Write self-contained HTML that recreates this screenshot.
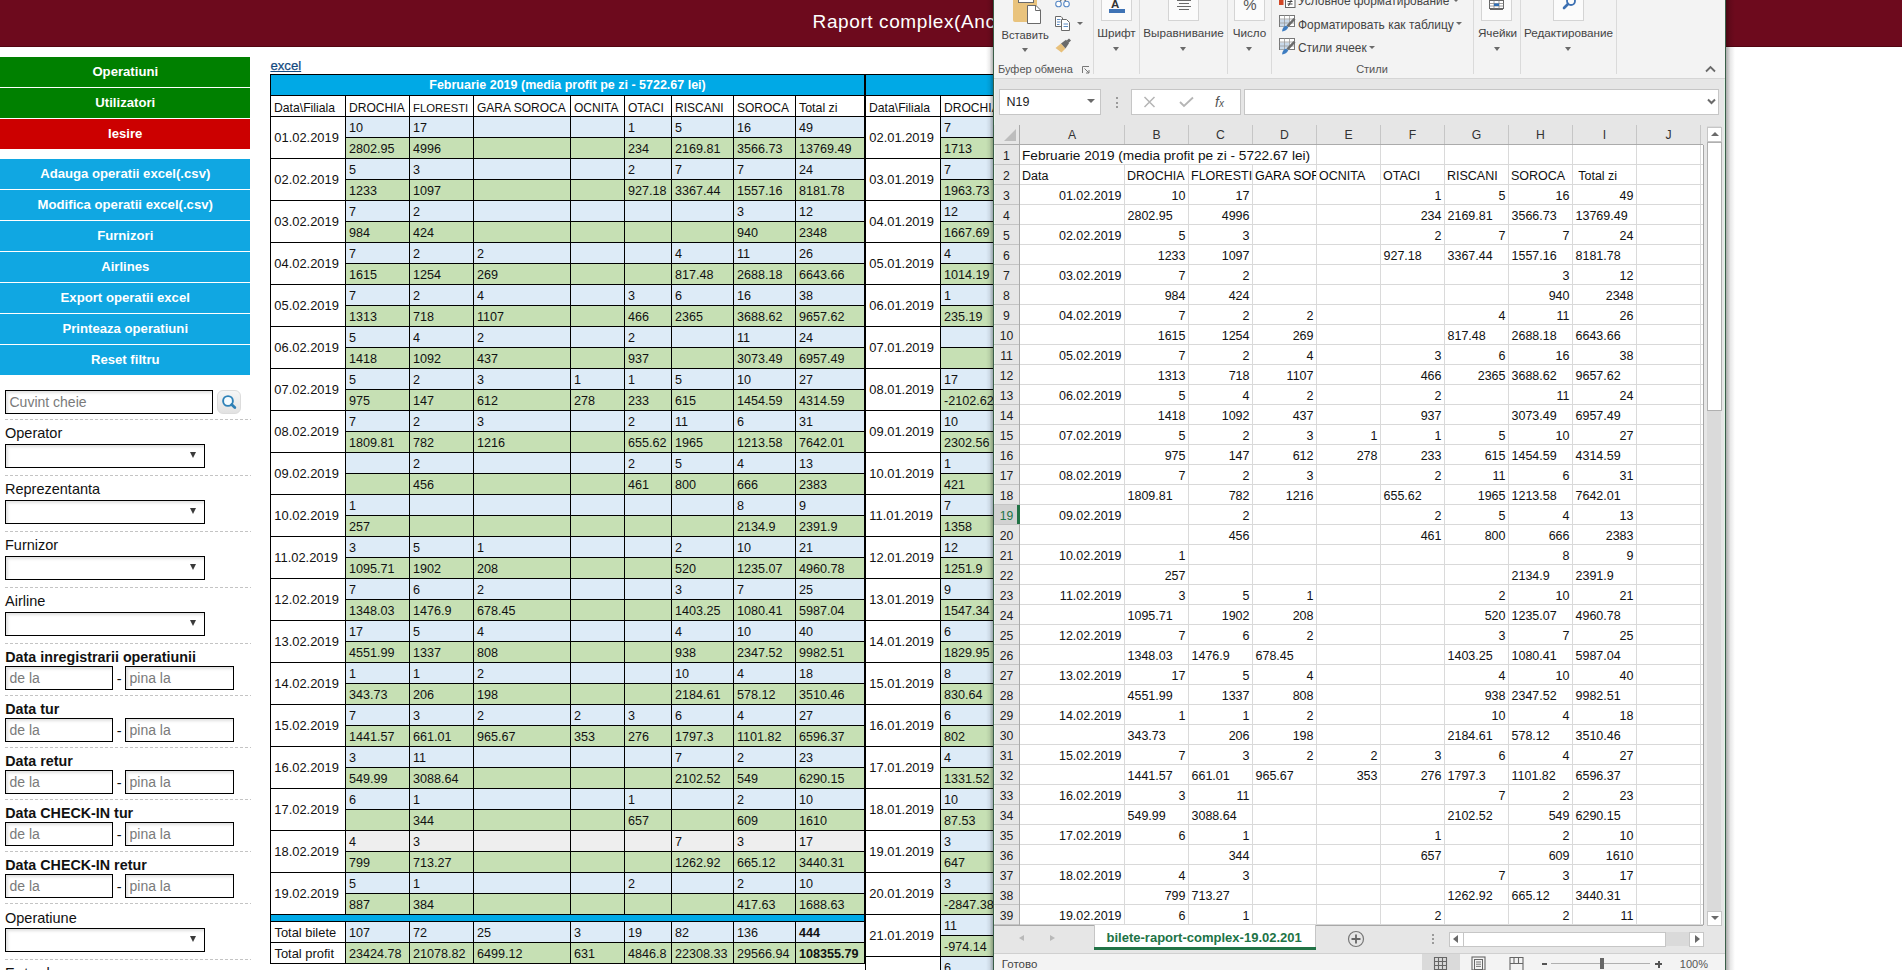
<!DOCTYPE html>
<html><head><meta charset="utf-8"><title>Raport complex</title>
<style>
html,body{margin:0;padding:0;width:1902px;height:970px;overflow:hidden;background:#fff;position:relative;font-family:"Liberation Sans",sans-serif}
div,svg{position:absolute;box-sizing:content-box}
.t{white-space:pre;line-height:0;height:0}
.inp{border:1px solid #000;background:#fff;box-shadow:inset 2px 2px 3px rgba(0,0,0,0.12)}
</style></head><body>
<div style="left:0px;top:0px;width:1902px;height:46px;background:#6d0a1d;"></div>
<div style="left:0px;top:46px;width:1902px;height:1px;background:#520512;"></div>
<div class="t" style="left:812.6px;top:21.72px;font-size:19px;color:#fff;letter-spacing:0.6px">Raport complex(Ancheta)</div>
<div style="left:0px;top:57px;width:250px;height:30px;background:#008000;"></div>
<div class="t" style="left:-374.75px;width:1000px;text-align:center;top:72.24px;font-size:13.15px;font-weight:bold;color:#fff;">Operatiuni</div>
<div style="left:0px;top:88px;width:250px;height:30px;background:#008000;"></div>
<div class="t" style="left:-374.75px;width:1000px;text-align:center;top:103.24px;font-size:13.15px;font-weight:bold;color:#fff;">Utilizatori</div>
<div style="left:0px;top:119px;width:250px;height:30px;background:#cc0000;"></div>
<div class="t" style="left:-374.75px;width:1000px;text-align:center;top:134.24px;font-size:13.15px;font-weight:bold;color:#fff;">Iesire</div>
<div style="left:0px;top:159px;width:250px;height:30px;background:#10a7e2;"></div>
<div class="t" style="left:-374.75px;width:1000px;text-align:center;top:174.24px;font-size:13.15px;font-weight:bold;color:#fff;">Adauga operatii excel(.csv)</div>
<div style="left:0px;top:190px;width:250px;height:30px;background:#10a7e2;"></div>
<div class="t" style="left:-374.75px;width:1000px;text-align:center;top:205.24px;font-size:13.15px;font-weight:bold;color:#fff;">Modifica operatii excel(.csv)</div>
<div style="left:0px;top:221px;width:250px;height:30px;background:#10a7e2;"></div>
<div class="t" style="left:-374.75px;width:1000px;text-align:center;top:236.24px;font-size:13.15px;font-weight:bold;color:#fff;">Furnizori</div>
<div style="left:0px;top:252px;width:250px;height:30px;background:#10a7e2;"></div>
<div class="t" style="left:-374.75px;width:1000px;text-align:center;top:267.24px;font-size:13.15px;font-weight:bold;color:#fff;">Airlines</div>
<div style="left:0px;top:283px;width:250px;height:30px;background:#10a7e2;"></div>
<div class="t" style="left:-374.75px;width:1000px;text-align:center;top:298.24px;font-size:13.15px;font-weight:bold;color:#fff;">Export operatii excel</div>
<div style="left:0px;top:314px;width:250px;height:30px;background:#10a7e2;"></div>
<div class="t" style="left:-374.75px;width:1000px;text-align:center;top:329.24px;font-size:13.15px;font-weight:bold;color:#fff;">Printeaza operatiuni</div>
<div style="left:0px;top:345px;width:250px;height:30px;background:#10a7e2;"></div>
<div class="t" style="left:-374.75px;width:1000px;text-align:center;top:360.24px;font-size:13.15px;font-weight:bold;color:#fff;">Reset filtru</div>
<div class="inp" style="left:5px;top:390px;width:206px;height:22px"></div>
<div class="t" style="left:9.5px;top:401.95px;font-size:14px;color:#7a7a7a;">Cuvint cheie</div>
<div style="left:217px;top:390px;width:22px;height:22px;border-radius:6px;border:1px solid #dcdcdc;background:linear-gradient(#f6f6f6,#e2e2e2)"></div>
<svg style="left:218px;top:391px" width="22" height="22" viewBox="0 0 22 22"><circle cx="10" cy="10" r="4.9" fill="#f4fbff" stroke="#2f82b8" stroke-width="1.9"/><line x1="13.6" y1="13.6" x2="16.8" y2="16.6" stroke="#2e7fb5" stroke-width="2.8" stroke-linecap="round"/></svg>
<div style="left:5px;top:419px;width:246px;height:1px;background:repeating-linear-gradient(to right,#c4c4c4 0 3px,transparent 3px 5px);"></div>
<div class="t" style="left:5px;top:433.38px;font-size:14.5px;color:#111;">Operator</div>
<div class="inp" style="left:5px;top:444px;width:198px;height:22px"></div>
<div style="left:189.5px;top:452px;width:0;height:0;border-left:3.5px solid transparent;border-right:3.5px solid transparent;border-top:6px solid #3a3a3a"></div>
<div style="left:5px;top:475px;width:246px;height:1px;background:repeating-linear-gradient(to right,#c4c4c4 0 3px,transparent 3px 5px);"></div>
<div class="t" style="left:5px;top:489.38px;font-size:14.5px;color:#111;">Reprezentanta</div>
<div class="inp" style="left:5px;top:500px;width:198px;height:22px"></div>
<div style="left:189.5px;top:508px;width:0;height:0;border-left:3.5px solid transparent;border-right:3.5px solid transparent;border-top:6px solid #3a3a3a"></div>
<div style="left:5px;top:531px;width:246px;height:1px;background:repeating-linear-gradient(to right,#c4c4c4 0 3px,transparent 3px 5px);"></div>
<div class="t" style="left:5px;top:545.38px;font-size:14.5px;color:#111;">Furnizor</div>
<div class="inp" style="left:5px;top:556px;width:198px;height:22px"></div>
<div style="left:189.5px;top:564px;width:0;height:0;border-left:3.5px solid transparent;border-right:3.5px solid transparent;border-top:6px solid #3a3a3a"></div>
<div style="left:5px;top:587px;width:246px;height:1px;background:repeating-linear-gradient(to right,#c4c4c4 0 3px,transparent 3px 5px);"></div>
<div class="t" style="left:5px;top:601.38px;font-size:14.5px;color:#111;">Airline</div>
<div class="inp" style="left:5px;top:612px;width:198px;height:22px"></div>
<div style="left:189.5px;top:620px;width:0;height:0;border-left:3.5px solid transparent;border-right:3.5px solid transparent;border-top:6px solid #3a3a3a"></div>
<div style="left:5px;top:643px;width:246px;height:1px;background:repeating-linear-gradient(to right,#c4c4c4 0 3px,transparent 3px 5px);"></div>
<div class="t" style="left:5.3px;top:657.45px;font-size:14.3px;font-weight:bold;color:#111;">Data inregistrarii operatiunii</div>
<div class="inp" style="left:5px;top:666px;width:106px;height:22px"></div>
<div class="t" style="left:9.5px;top:677.95px;font-size:14px;color:#7a7a7a;">de la</div>
<div class="t" style="left:116.8px;top:678.98px;font-size:14.5px;color:#111;">-</div>
<div class="inp" style="left:125px;top:666px;width:107px;height:22px"></div>
<div class="t" style="left:129.5px;top:677.95px;font-size:14px;color:#7a7a7a;">pina la</div>
<div style="left:5px;top:695px;width:246px;height:1px;background:repeating-linear-gradient(to right,#c4c4c4 0 3px,transparent 3px 5px);"></div>
<div class="t" style="left:5.3px;top:709.45px;font-size:14.3px;font-weight:bold;color:#111;">Data tur</div>
<div class="inp" style="left:5px;top:718px;width:106px;height:22px"></div>
<div class="t" style="left:9.5px;top:729.95px;font-size:14px;color:#7a7a7a;">de la</div>
<div class="t" style="left:116.8px;top:730.98px;font-size:14.5px;color:#111;">-</div>
<div class="inp" style="left:125px;top:718px;width:107px;height:22px"></div>
<div class="t" style="left:129.5px;top:729.95px;font-size:14px;color:#7a7a7a;">pina la</div>
<div style="left:5px;top:747px;width:246px;height:1px;background:repeating-linear-gradient(to right,#c4c4c4 0 3px,transparent 3px 5px);"></div>
<div class="t" style="left:5.3px;top:761.45px;font-size:14.3px;font-weight:bold;color:#111;">Data retur</div>
<div class="inp" style="left:5px;top:770px;width:106px;height:22px"></div>
<div class="t" style="left:9.5px;top:781.95px;font-size:14px;color:#7a7a7a;">de la</div>
<div class="t" style="left:116.8px;top:782.98px;font-size:14.5px;color:#111;">-</div>
<div class="inp" style="left:125px;top:770px;width:107px;height:22px"></div>
<div class="t" style="left:129.5px;top:781.95px;font-size:14px;color:#7a7a7a;">pina la</div>
<div style="left:5px;top:799px;width:246px;height:1px;background:repeating-linear-gradient(to right,#c4c4c4 0 3px,transparent 3px 5px);"></div>
<div class="t" style="left:5.3px;top:813.45px;font-size:14.3px;font-weight:bold;color:#111;">Data CHECK-IN tur</div>
<div class="inp" style="left:5px;top:822px;width:106px;height:22px"></div>
<div class="t" style="left:9.5px;top:833.95px;font-size:14px;color:#7a7a7a;">de la</div>
<div class="t" style="left:116.8px;top:834.98px;font-size:14.5px;color:#111;">-</div>
<div class="inp" style="left:125px;top:822px;width:107px;height:22px"></div>
<div class="t" style="left:129.5px;top:833.95px;font-size:14px;color:#7a7a7a;">pina la</div>
<div style="left:5px;top:851px;width:246px;height:1px;background:repeating-linear-gradient(to right,#c4c4c4 0 3px,transparent 3px 5px);"></div>
<div class="t" style="left:5.3px;top:865.45px;font-size:14.3px;font-weight:bold;color:#111;">Data CHECK-IN retur</div>
<div class="inp" style="left:5px;top:874px;width:106px;height:22px"></div>
<div class="t" style="left:9.5px;top:885.95px;font-size:14px;color:#7a7a7a;">de la</div>
<div class="t" style="left:116.8px;top:886.98px;font-size:14.5px;color:#111;">-</div>
<div class="inp" style="left:125px;top:874px;width:107px;height:22px"></div>
<div class="t" style="left:129.5px;top:885.95px;font-size:14px;color:#7a7a7a;">pina la</div>
<div style="left:5px;top:903px;width:246px;height:1px;background:repeating-linear-gradient(to right,#c4c4c4 0 3px,transparent 3px 5px);"></div>
<div class="t" style="left:5px;top:917.58px;font-size:14.5px;color:#111;">Operatiune</div>
<div class="inp" style="left:5px;top:928px;width:198px;height:22px"></div>
<div style="left:189.5px;top:936px;width:0;height:0;border-left:3.5px solid transparent;border-right:3.5px solid transparent;border-top:6px solid #3a3a3a"></div>
<div style="left:5px;top:959px;width:246px;height:1px;background:repeating-linear-gradient(to right,#c4c4c4 0 3px,transparent 3px 5px);"></div>
<div class="t" style="left:5px;top:972.68px;font-size:14.5px;color:#111;">E</div>
<div class="t" style="left:24.3px;top:972.68px;font-size:14.5px;color:#111;">t</div>
<div class="t" style="left:46.6px;top:972.68px;font-size:14.5px;color:#111;">l</div>
<div class="t" style="left:270.4px;top:66.03px;font-size:13.2px;color:#134a80;text-decoration-thickness:1px;-webkit-text-stroke:0.25px #134a80"><u>excel</u></div>
<div style="left:271px;top:75px;width:593px;height:20px;background:#00a9e6;"></div>
<div class="t" style="left:67.5px;width:1000px;text-align:center;top:85.37px;font-size:12.5px;font-weight:bold;color:#fff;">Februarie 2019 (media profit pe zi - 5722.67 lei)</div>
<div style="left:271px;top:96px;width:593px;height:20px;background:#fff;"></div>
<div class="t" style="left:274px;top:107.57px;font-size:12.2px;color:#111;">Data\Filiala</div>
<div class="t" style="left:349px;top:107.61px;font-size:12.1px;color:#111;">DROCHIA</div>
<div class="t" style="left:413px;top:107.88px;font-size:11.3px;color:#111;">FLORESTI</div>
<div class="t" style="left:477px;top:107.64px;font-size:12.0px;color:#111;">GARA SOROCA</div>
<div class="t" style="left:574px;top:107.64px;font-size:12.0px;color:#111;">OCNITA</div>
<div class="t" style="left:628px;top:107.64px;font-size:12.0px;color:#111;">OTACI</div>
<div class="t" style="left:675px;top:107.64px;font-size:12.0px;color:#111;">RISCANI</div>
<div class="t" style="left:737px;top:107.64px;font-size:12.0px;color:#111;">SOROCA</div>
<div class="t" style="left:799px;top:107.50px;font-size:12.4px;color:#111;">Total zi</div>
<div style="left:346px;top:117px;width:518px;height:20px;background:#ddebf7;"></div>
<div style="left:346px;top:138px;width:518px;height:20px;background:#c6e0b4;"></div>
<div class="t" style="left:274.3px;top:138.03px;font-size:12.9px;color:#111;">01.02.2019</div>
<div class="t" style="left:349px;top:128.23px;font-size:12.6px;color:#111;">10</div>
<div class="t" style="left:349px;top:149.23px;font-size:12.6px;color:#111;">2802.95</div>
<div class="t" style="left:413px;top:128.23px;font-size:12.6px;color:#111;">17</div>
<div class="t" style="left:413px;top:149.23px;font-size:12.6px;color:#111;">4996</div>
<div class="t" style="left:628px;top:128.23px;font-size:12.6px;color:#111;">1</div>
<div class="t" style="left:628px;top:149.23px;font-size:12.6px;color:#111;">234</div>
<div class="t" style="left:675px;top:128.23px;font-size:12.6px;color:#111;">5</div>
<div class="t" style="left:675px;top:149.23px;font-size:12.6px;color:#111;">2169.81</div>
<div class="t" style="left:737px;top:128.23px;font-size:12.6px;color:#111;">16</div>
<div class="t" style="left:737px;top:149.23px;font-size:12.6px;color:#111;">3566.73</div>
<div class="t" style="left:799px;top:128.23px;font-size:12.6px;color:#111;">49</div>
<div class="t" style="left:799px;top:149.23px;font-size:12.6px;color:#111;">13769.49</div>
<div style="left:346px;top:159px;width:518px;height:20px;background:#ddebf7;"></div>
<div style="left:346px;top:180px;width:518px;height:20px;background:#c6e0b4;"></div>
<div class="t" style="left:274.3px;top:180.03px;font-size:12.9px;color:#111;">02.02.2019</div>
<div class="t" style="left:349px;top:170.23px;font-size:12.6px;color:#111;">5</div>
<div class="t" style="left:349px;top:191.23px;font-size:12.6px;color:#111;">1233</div>
<div class="t" style="left:413px;top:170.23px;font-size:12.6px;color:#111;">3</div>
<div class="t" style="left:413px;top:191.23px;font-size:12.6px;color:#111;">1097</div>
<div class="t" style="left:628px;top:170.23px;font-size:12.6px;color:#111;">2</div>
<div class="t" style="left:628px;top:191.23px;font-size:12.6px;color:#111;">927.18</div>
<div class="t" style="left:675px;top:170.23px;font-size:12.6px;color:#111;">7</div>
<div class="t" style="left:675px;top:191.23px;font-size:12.6px;color:#111;">3367.44</div>
<div class="t" style="left:737px;top:170.23px;font-size:12.6px;color:#111;">7</div>
<div class="t" style="left:737px;top:191.23px;font-size:12.6px;color:#111;">1557.16</div>
<div class="t" style="left:799px;top:170.23px;font-size:12.6px;color:#111;">24</div>
<div class="t" style="left:799px;top:191.23px;font-size:12.6px;color:#111;">8181.78</div>
<div style="left:346px;top:201px;width:518px;height:20px;background:#ddebf7;"></div>
<div style="left:346px;top:222px;width:518px;height:20px;background:#c6e0b4;"></div>
<div class="t" style="left:274.3px;top:222.03px;font-size:12.9px;color:#111;">03.02.2019</div>
<div class="t" style="left:349px;top:212.23px;font-size:12.6px;color:#111;">7</div>
<div class="t" style="left:349px;top:233.23px;font-size:12.6px;color:#111;">984</div>
<div class="t" style="left:413px;top:212.23px;font-size:12.6px;color:#111;">2</div>
<div class="t" style="left:413px;top:233.23px;font-size:12.6px;color:#111;">424</div>
<div class="t" style="left:737px;top:212.23px;font-size:12.6px;color:#111;">3</div>
<div class="t" style="left:737px;top:233.23px;font-size:12.6px;color:#111;">940</div>
<div class="t" style="left:799px;top:212.23px;font-size:12.6px;color:#111;">12</div>
<div class="t" style="left:799px;top:233.23px;font-size:12.6px;color:#111;">2348</div>
<div style="left:346px;top:243px;width:518px;height:20px;background:#ddebf7;"></div>
<div style="left:346px;top:264px;width:518px;height:20px;background:#c6e0b4;"></div>
<div class="t" style="left:274.3px;top:264.03px;font-size:12.9px;color:#111;">04.02.2019</div>
<div class="t" style="left:349px;top:254.23px;font-size:12.6px;color:#111;">7</div>
<div class="t" style="left:349px;top:275.23px;font-size:12.6px;color:#111;">1615</div>
<div class="t" style="left:413px;top:254.23px;font-size:12.6px;color:#111;">2</div>
<div class="t" style="left:413px;top:275.23px;font-size:12.6px;color:#111;">1254</div>
<div class="t" style="left:477px;top:254.23px;font-size:12.6px;color:#111;">2</div>
<div class="t" style="left:477px;top:275.23px;font-size:12.6px;color:#111;">269</div>
<div class="t" style="left:675px;top:254.23px;font-size:12.6px;color:#111;">4</div>
<div class="t" style="left:675px;top:275.23px;font-size:12.6px;color:#111;">817.48</div>
<div class="t" style="left:737px;top:254.23px;font-size:12.6px;color:#111;">11</div>
<div class="t" style="left:737px;top:275.23px;font-size:12.6px;color:#111;">2688.18</div>
<div class="t" style="left:799px;top:254.23px;font-size:12.6px;color:#111;">26</div>
<div class="t" style="left:799px;top:275.23px;font-size:12.6px;color:#111;">6643.66</div>
<div style="left:346px;top:285px;width:518px;height:20px;background:#ddebf7;"></div>
<div style="left:346px;top:306px;width:518px;height:20px;background:#c6e0b4;"></div>
<div class="t" style="left:274.3px;top:306.03px;font-size:12.9px;color:#111;">05.02.2019</div>
<div class="t" style="left:349px;top:296.23px;font-size:12.6px;color:#111;">7</div>
<div class="t" style="left:349px;top:317.23px;font-size:12.6px;color:#111;">1313</div>
<div class="t" style="left:413px;top:296.23px;font-size:12.6px;color:#111;">2</div>
<div class="t" style="left:413px;top:317.23px;font-size:12.6px;color:#111;">718</div>
<div class="t" style="left:477px;top:296.23px;font-size:12.6px;color:#111;">4</div>
<div class="t" style="left:477px;top:317.23px;font-size:12.6px;color:#111;">1107</div>
<div class="t" style="left:628px;top:296.23px;font-size:12.6px;color:#111;">3</div>
<div class="t" style="left:628px;top:317.23px;font-size:12.6px;color:#111;">466</div>
<div class="t" style="left:675px;top:296.23px;font-size:12.6px;color:#111;">6</div>
<div class="t" style="left:675px;top:317.23px;font-size:12.6px;color:#111;">2365</div>
<div class="t" style="left:737px;top:296.23px;font-size:12.6px;color:#111;">16</div>
<div class="t" style="left:737px;top:317.23px;font-size:12.6px;color:#111;">3688.62</div>
<div class="t" style="left:799px;top:296.23px;font-size:12.6px;color:#111;">38</div>
<div class="t" style="left:799px;top:317.23px;font-size:12.6px;color:#111;">9657.62</div>
<div style="left:346px;top:327px;width:518px;height:20px;background:#ddebf7;"></div>
<div style="left:346px;top:348px;width:518px;height:20px;background:#c6e0b4;"></div>
<div class="t" style="left:274.3px;top:348.03px;font-size:12.9px;color:#111;">06.02.2019</div>
<div class="t" style="left:349px;top:338.23px;font-size:12.6px;color:#111;">5</div>
<div class="t" style="left:349px;top:359.23px;font-size:12.6px;color:#111;">1418</div>
<div class="t" style="left:413px;top:338.23px;font-size:12.6px;color:#111;">4</div>
<div class="t" style="left:413px;top:359.23px;font-size:12.6px;color:#111;">1092</div>
<div class="t" style="left:477px;top:338.23px;font-size:12.6px;color:#111;">2</div>
<div class="t" style="left:477px;top:359.23px;font-size:12.6px;color:#111;">437</div>
<div class="t" style="left:628px;top:338.23px;font-size:12.6px;color:#111;">2</div>
<div class="t" style="left:628px;top:359.23px;font-size:12.6px;color:#111;">937</div>
<div class="t" style="left:737px;top:338.23px;font-size:12.6px;color:#111;">11</div>
<div class="t" style="left:737px;top:359.23px;font-size:12.6px;color:#111;">3073.49</div>
<div class="t" style="left:799px;top:338.23px;font-size:12.6px;color:#111;">24</div>
<div class="t" style="left:799px;top:359.23px;font-size:12.6px;color:#111;">6957.49</div>
<div style="left:346px;top:369px;width:518px;height:20px;background:#ddebf7;"></div>
<div style="left:346px;top:390px;width:518px;height:20px;background:#c6e0b4;"></div>
<div class="t" style="left:274.3px;top:390.03px;font-size:12.9px;color:#111;">07.02.2019</div>
<div class="t" style="left:349px;top:380.23px;font-size:12.6px;color:#111;">5</div>
<div class="t" style="left:349px;top:401.23px;font-size:12.6px;color:#111;">975</div>
<div class="t" style="left:413px;top:380.23px;font-size:12.6px;color:#111;">2</div>
<div class="t" style="left:413px;top:401.23px;font-size:12.6px;color:#111;">147</div>
<div class="t" style="left:477px;top:380.23px;font-size:12.6px;color:#111;">3</div>
<div class="t" style="left:477px;top:401.23px;font-size:12.6px;color:#111;">612</div>
<div class="t" style="left:574px;top:380.23px;font-size:12.6px;color:#111;">1</div>
<div class="t" style="left:574px;top:401.23px;font-size:12.6px;color:#111;">278</div>
<div class="t" style="left:628px;top:380.23px;font-size:12.6px;color:#111;">1</div>
<div class="t" style="left:628px;top:401.23px;font-size:12.6px;color:#111;">233</div>
<div class="t" style="left:675px;top:380.23px;font-size:12.6px;color:#111;">5</div>
<div class="t" style="left:675px;top:401.23px;font-size:12.6px;color:#111;">615</div>
<div class="t" style="left:737px;top:380.23px;font-size:12.6px;color:#111;">10</div>
<div class="t" style="left:737px;top:401.23px;font-size:12.6px;color:#111;">1454.59</div>
<div class="t" style="left:799px;top:380.23px;font-size:12.6px;color:#111;">27</div>
<div class="t" style="left:799px;top:401.23px;font-size:12.6px;color:#111;">4314.59</div>
<div style="left:346px;top:411px;width:518px;height:20px;background:#ddebf7;"></div>
<div style="left:346px;top:432px;width:518px;height:20px;background:#c6e0b4;"></div>
<div class="t" style="left:274.3px;top:432.03px;font-size:12.9px;color:#111;">08.02.2019</div>
<div class="t" style="left:349px;top:422.23px;font-size:12.6px;color:#111;">7</div>
<div class="t" style="left:349px;top:443.23px;font-size:12.6px;color:#111;">1809.81</div>
<div class="t" style="left:413px;top:422.23px;font-size:12.6px;color:#111;">2</div>
<div class="t" style="left:413px;top:443.23px;font-size:12.6px;color:#111;">782</div>
<div class="t" style="left:477px;top:422.23px;font-size:12.6px;color:#111;">3</div>
<div class="t" style="left:477px;top:443.23px;font-size:12.6px;color:#111;">1216</div>
<div class="t" style="left:628px;top:422.23px;font-size:12.6px;color:#111;">2</div>
<div class="t" style="left:628px;top:443.23px;font-size:12.6px;color:#111;">655.62</div>
<div class="t" style="left:675px;top:422.23px;font-size:12.6px;color:#111;">11</div>
<div class="t" style="left:675px;top:443.23px;font-size:12.6px;color:#111;">1965</div>
<div class="t" style="left:737px;top:422.23px;font-size:12.6px;color:#111;">6</div>
<div class="t" style="left:737px;top:443.23px;font-size:12.6px;color:#111;">1213.58</div>
<div class="t" style="left:799px;top:422.23px;font-size:12.6px;color:#111;">31</div>
<div class="t" style="left:799px;top:443.23px;font-size:12.6px;color:#111;">7642.01</div>
<div style="left:346px;top:453px;width:518px;height:20px;background:#ddebf7;"></div>
<div style="left:346px;top:474px;width:518px;height:20px;background:#c6e0b4;"></div>
<div class="t" style="left:274.3px;top:474.03px;font-size:12.9px;color:#111;">09.02.2019</div>
<div class="t" style="left:413px;top:464.23px;font-size:12.6px;color:#111;">2</div>
<div class="t" style="left:413px;top:485.23px;font-size:12.6px;color:#111;">456</div>
<div class="t" style="left:628px;top:464.23px;font-size:12.6px;color:#111;">2</div>
<div class="t" style="left:628px;top:485.23px;font-size:12.6px;color:#111;">461</div>
<div class="t" style="left:675px;top:464.23px;font-size:12.6px;color:#111;">5</div>
<div class="t" style="left:675px;top:485.23px;font-size:12.6px;color:#111;">800</div>
<div class="t" style="left:737px;top:464.23px;font-size:12.6px;color:#111;">4</div>
<div class="t" style="left:737px;top:485.23px;font-size:12.6px;color:#111;">666</div>
<div class="t" style="left:799px;top:464.23px;font-size:12.6px;color:#111;">13</div>
<div class="t" style="left:799px;top:485.23px;font-size:12.6px;color:#111;">2383</div>
<div style="left:346px;top:495px;width:518px;height:20px;background:#ddebf7;"></div>
<div style="left:346px;top:516px;width:518px;height:20px;background:#c6e0b4;"></div>
<div class="t" style="left:274.3px;top:516.03px;font-size:12.9px;color:#111;">10.02.2019</div>
<div class="t" style="left:349px;top:506.23px;font-size:12.6px;color:#111;">1</div>
<div class="t" style="left:349px;top:527.23px;font-size:12.6px;color:#111;">257</div>
<div class="t" style="left:737px;top:506.23px;font-size:12.6px;color:#111;">8</div>
<div class="t" style="left:737px;top:527.23px;font-size:12.6px;color:#111;">2134.9</div>
<div class="t" style="left:799px;top:506.23px;font-size:12.6px;color:#111;">9</div>
<div class="t" style="left:799px;top:527.23px;font-size:12.6px;color:#111;">2391.9</div>
<div style="left:346px;top:537px;width:518px;height:20px;background:#ddebf7;"></div>
<div style="left:346px;top:558px;width:518px;height:20px;background:#c6e0b4;"></div>
<div class="t" style="left:274.3px;top:558.03px;font-size:12.9px;color:#111;">11.02.2019</div>
<div class="t" style="left:349px;top:548.23px;font-size:12.6px;color:#111;">3</div>
<div class="t" style="left:349px;top:569.23px;font-size:12.6px;color:#111;">1095.71</div>
<div class="t" style="left:413px;top:548.23px;font-size:12.6px;color:#111;">5</div>
<div class="t" style="left:413px;top:569.23px;font-size:12.6px;color:#111;">1902</div>
<div class="t" style="left:477px;top:548.23px;font-size:12.6px;color:#111;">1</div>
<div class="t" style="left:477px;top:569.23px;font-size:12.6px;color:#111;">208</div>
<div class="t" style="left:675px;top:548.23px;font-size:12.6px;color:#111;">2</div>
<div class="t" style="left:675px;top:569.23px;font-size:12.6px;color:#111;">520</div>
<div class="t" style="left:737px;top:548.23px;font-size:12.6px;color:#111;">10</div>
<div class="t" style="left:737px;top:569.23px;font-size:12.6px;color:#111;">1235.07</div>
<div class="t" style="left:799px;top:548.23px;font-size:12.6px;color:#111;">21</div>
<div class="t" style="left:799px;top:569.23px;font-size:12.6px;color:#111;">4960.78</div>
<div style="left:346px;top:579px;width:518px;height:20px;background:#ddebf7;"></div>
<div style="left:346px;top:600px;width:518px;height:20px;background:#c6e0b4;"></div>
<div class="t" style="left:274.3px;top:600.03px;font-size:12.9px;color:#111;">12.02.2019</div>
<div class="t" style="left:349px;top:590.23px;font-size:12.6px;color:#111;">7</div>
<div class="t" style="left:349px;top:611.23px;font-size:12.6px;color:#111;">1348.03</div>
<div class="t" style="left:413px;top:590.23px;font-size:12.6px;color:#111;">6</div>
<div class="t" style="left:413px;top:611.23px;font-size:12.6px;color:#111;">1476.9</div>
<div class="t" style="left:477px;top:590.23px;font-size:12.6px;color:#111;">2</div>
<div class="t" style="left:477px;top:611.23px;font-size:12.6px;color:#111;">678.45</div>
<div class="t" style="left:675px;top:590.23px;font-size:12.6px;color:#111;">3</div>
<div class="t" style="left:675px;top:611.23px;font-size:12.6px;color:#111;">1403.25</div>
<div class="t" style="left:737px;top:590.23px;font-size:12.6px;color:#111;">7</div>
<div class="t" style="left:737px;top:611.23px;font-size:12.6px;color:#111;">1080.41</div>
<div class="t" style="left:799px;top:590.23px;font-size:12.6px;color:#111;">25</div>
<div class="t" style="left:799px;top:611.23px;font-size:12.6px;color:#111;">5987.04</div>
<div style="left:346px;top:621px;width:518px;height:20px;background:#ddebf7;"></div>
<div style="left:346px;top:642px;width:518px;height:20px;background:#c6e0b4;"></div>
<div class="t" style="left:274.3px;top:642.03px;font-size:12.9px;color:#111;">13.02.2019</div>
<div class="t" style="left:349px;top:632.23px;font-size:12.6px;color:#111;">17</div>
<div class="t" style="left:349px;top:653.23px;font-size:12.6px;color:#111;">4551.99</div>
<div class="t" style="left:413px;top:632.23px;font-size:12.6px;color:#111;">5</div>
<div class="t" style="left:413px;top:653.23px;font-size:12.6px;color:#111;">1337</div>
<div class="t" style="left:477px;top:632.23px;font-size:12.6px;color:#111;">4</div>
<div class="t" style="left:477px;top:653.23px;font-size:12.6px;color:#111;">808</div>
<div class="t" style="left:675px;top:632.23px;font-size:12.6px;color:#111;">4</div>
<div class="t" style="left:675px;top:653.23px;font-size:12.6px;color:#111;">938</div>
<div class="t" style="left:737px;top:632.23px;font-size:12.6px;color:#111;">10</div>
<div class="t" style="left:737px;top:653.23px;font-size:12.6px;color:#111;">2347.52</div>
<div class="t" style="left:799px;top:632.23px;font-size:12.6px;color:#111;">40</div>
<div class="t" style="left:799px;top:653.23px;font-size:12.6px;color:#111;">9982.51</div>
<div style="left:346px;top:663px;width:518px;height:20px;background:#ddebf7;"></div>
<div style="left:346px;top:684px;width:518px;height:20px;background:#c6e0b4;"></div>
<div class="t" style="left:274.3px;top:684.03px;font-size:12.9px;color:#111;">14.02.2019</div>
<div class="t" style="left:349px;top:674.23px;font-size:12.6px;color:#111;">1</div>
<div class="t" style="left:349px;top:695.23px;font-size:12.6px;color:#111;">343.73</div>
<div class="t" style="left:413px;top:674.23px;font-size:12.6px;color:#111;">1</div>
<div class="t" style="left:413px;top:695.23px;font-size:12.6px;color:#111;">206</div>
<div class="t" style="left:477px;top:674.23px;font-size:12.6px;color:#111;">2</div>
<div class="t" style="left:477px;top:695.23px;font-size:12.6px;color:#111;">198</div>
<div class="t" style="left:675px;top:674.23px;font-size:12.6px;color:#111;">10</div>
<div class="t" style="left:675px;top:695.23px;font-size:12.6px;color:#111;">2184.61</div>
<div class="t" style="left:737px;top:674.23px;font-size:12.6px;color:#111;">4</div>
<div class="t" style="left:737px;top:695.23px;font-size:12.6px;color:#111;">578.12</div>
<div class="t" style="left:799px;top:674.23px;font-size:12.6px;color:#111;">18</div>
<div class="t" style="left:799px;top:695.23px;font-size:12.6px;color:#111;">3510.46</div>
<div style="left:346px;top:705px;width:518px;height:20px;background:#ddebf7;"></div>
<div style="left:346px;top:726px;width:518px;height:20px;background:#c6e0b4;"></div>
<div class="t" style="left:274.3px;top:726.03px;font-size:12.9px;color:#111;">15.02.2019</div>
<div class="t" style="left:349px;top:716.23px;font-size:12.6px;color:#111;">7</div>
<div class="t" style="left:349px;top:737.23px;font-size:12.6px;color:#111;">1441.57</div>
<div class="t" style="left:413px;top:716.23px;font-size:12.6px;color:#111;">3</div>
<div class="t" style="left:413px;top:737.23px;font-size:12.6px;color:#111;">661.01</div>
<div class="t" style="left:477px;top:716.23px;font-size:12.6px;color:#111;">2</div>
<div class="t" style="left:477px;top:737.23px;font-size:12.6px;color:#111;">965.67</div>
<div class="t" style="left:574px;top:716.23px;font-size:12.6px;color:#111;">2</div>
<div class="t" style="left:574px;top:737.23px;font-size:12.6px;color:#111;">353</div>
<div class="t" style="left:628px;top:716.23px;font-size:12.6px;color:#111;">3</div>
<div class="t" style="left:628px;top:737.23px;font-size:12.6px;color:#111;">276</div>
<div class="t" style="left:675px;top:716.23px;font-size:12.6px;color:#111;">6</div>
<div class="t" style="left:675px;top:737.23px;font-size:12.6px;color:#111;">1797.3</div>
<div class="t" style="left:737px;top:716.23px;font-size:12.6px;color:#111;">4</div>
<div class="t" style="left:737px;top:737.23px;font-size:12.6px;color:#111;">1101.82</div>
<div class="t" style="left:799px;top:716.23px;font-size:12.6px;color:#111;">27</div>
<div class="t" style="left:799px;top:737.23px;font-size:12.6px;color:#111;">6596.37</div>
<div style="left:346px;top:747px;width:518px;height:20px;background:#ddebf7;"></div>
<div style="left:346px;top:768px;width:518px;height:20px;background:#c6e0b4;"></div>
<div class="t" style="left:274.3px;top:768.03px;font-size:12.9px;color:#111;">16.02.2019</div>
<div class="t" style="left:349px;top:758.23px;font-size:12.6px;color:#111;">3</div>
<div class="t" style="left:349px;top:779.23px;font-size:12.6px;color:#111;">549.99</div>
<div class="t" style="left:413px;top:758.23px;font-size:12.6px;color:#111;">11</div>
<div class="t" style="left:413px;top:779.23px;font-size:12.6px;color:#111;">3088.64</div>
<div class="t" style="left:675px;top:758.23px;font-size:12.6px;color:#111;">7</div>
<div class="t" style="left:675px;top:779.23px;font-size:12.6px;color:#111;">2102.52</div>
<div class="t" style="left:737px;top:758.23px;font-size:12.6px;color:#111;">2</div>
<div class="t" style="left:737px;top:779.23px;font-size:12.6px;color:#111;">549</div>
<div class="t" style="left:799px;top:758.23px;font-size:12.6px;color:#111;">23</div>
<div class="t" style="left:799px;top:779.23px;font-size:12.6px;color:#111;">6290.15</div>
<div style="left:346px;top:789px;width:518px;height:20px;background:#ddebf7;"></div>
<div style="left:346px;top:810px;width:518px;height:20px;background:#c6e0b4;"></div>
<div class="t" style="left:274.3px;top:810.03px;font-size:12.9px;color:#111;">17.02.2019</div>
<div class="t" style="left:349px;top:800.23px;font-size:12.6px;color:#111;">6</div>
<div class="t" style="left:413px;top:800.23px;font-size:12.6px;color:#111;">1</div>
<div class="t" style="left:413px;top:821.23px;font-size:12.6px;color:#111;">344</div>
<div class="t" style="left:628px;top:800.23px;font-size:12.6px;color:#111;">1</div>
<div class="t" style="left:628px;top:821.23px;font-size:12.6px;color:#111;">657</div>
<div class="t" style="left:737px;top:800.23px;font-size:12.6px;color:#111;">2</div>
<div class="t" style="left:737px;top:821.23px;font-size:12.6px;color:#111;">609</div>
<div class="t" style="left:799px;top:800.23px;font-size:12.6px;color:#111;">10</div>
<div class="t" style="left:799px;top:821.23px;font-size:12.6px;color:#111;">1610</div>
<div style="left:346px;top:831px;width:518px;height:20px;background:#eeeeee;"></div>
<div style="left:346px;top:852px;width:518px;height:20px;background:#c6e0b4;"></div>
<div class="t" style="left:274.3px;top:852.03px;font-size:12.9px;color:#111;">18.02.2019</div>
<div class="t" style="left:349px;top:842.23px;font-size:12.6px;color:#111;">4</div>
<div class="t" style="left:349px;top:863.23px;font-size:12.6px;color:#111;">799</div>
<div class="t" style="left:413px;top:842.23px;font-size:12.6px;color:#111;">3</div>
<div class="t" style="left:413px;top:863.23px;font-size:12.6px;color:#111;">713.27</div>
<div class="t" style="left:675px;top:842.23px;font-size:12.6px;color:#111;">7</div>
<div class="t" style="left:675px;top:863.23px;font-size:12.6px;color:#111;">1262.92</div>
<div class="t" style="left:737px;top:842.23px;font-size:12.6px;color:#111;">3</div>
<div class="t" style="left:737px;top:863.23px;font-size:12.6px;color:#111;">665.12</div>
<div class="t" style="left:799px;top:842.23px;font-size:12.6px;color:#111;">17</div>
<div class="t" style="left:799px;top:863.23px;font-size:12.6px;color:#111;">3440.31</div>
<div style="left:346px;top:873px;width:518px;height:20px;background:#ddebf7;"></div>
<div style="left:346px;top:894px;width:518px;height:20px;background:#c6e0b4;"></div>
<div class="t" style="left:274.3px;top:894.03px;font-size:12.9px;color:#111;">19.02.2019</div>
<div class="t" style="left:349px;top:884.23px;font-size:12.6px;color:#111;">5</div>
<div class="t" style="left:349px;top:905.23px;font-size:12.6px;color:#111;">887</div>
<div class="t" style="left:413px;top:884.23px;font-size:12.6px;color:#111;">1</div>
<div class="t" style="left:413px;top:905.23px;font-size:12.6px;color:#111;">384</div>
<div class="t" style="left:628px;top:884.23px;font-size:12.6px;color:#111;">2</div>
<div class="t" style="left:737px;top:884.23px;font-size:12.6px;color:#111;">2</div>
<div class="t" style="left:737px;top:905.23px;font-size:12.6px;color:#111;">417.63</div>
<div class="t" style="left:799px;top:884.23px;font-size:12.6px;color:#111;">10</div>
<div class="t" style="left:799px;top:905.23px;font-size:12.6px;color:#111;">1688.63</div>
<div style="left:271px;top:915px;width:593px;height:6px;background:#00a9e6;"></div>
<div style="left:346px;top:922px;width:518px;height:20px;background:#ddebf7;"></div>
<div style="left:346px;top:943px;width:518px;height:20px;background:#c6e0b4;"></div>
<div class="t" style="left:274.5px;top:932.53px;font-size:12.9px;color:#111;">Total bilete</div>
<div class="t" style="left:274.5px;top:953.53px;font-size:12.9px;color:#111;">Total profit</div>
<div class="t" style="left:349px;top:932.83px;font-size:12.6px;color:#111;">107</div>
<div class="t" style="left:349px;top:953.83px;font-size:12.6px;color:#111;">23424.78</div>
<div class="t" style="left:413px;top:932.83px;font-size:12.6px;color:#111;">72</div>
<div class="t" style="left:413px;top:953.83px;font-size:12.6px;color:#111;">21078.82</div>
<div class="t" style="left:477px;top:932.83px;font-size:12.6px;color:#111;">25</div>
<div class="t" style="left:477px;top:953.83px;font-size:12.6px;color:#111;">6499.12</div>
<div class="t" style="left:574px;top:932.83px;font-size:12.6px;color:#111;">3</div>
<div class="t" style="left:574px;top:953.83px;font-size:12.6px;color:#111;">631</div>
<div class="t" style="left:628px;top:932.83px;font-size:12.6px;color:#111;">19</div>
<div class="t" style="left:628px;top:953.83px;font-size:12.6px;color:#111;">4846.8</div>
<div class="t" style="left:675px;top:932.83px;font-size:12.6px;color:#111;">82</div>
<div class="t" style="left:675px;top:953.83px;font-size:12.6px;color:#111;">22308.33</div>
<div class="t" style="left:737px;top:932.83px;font-size:12.6px;color:#111;">136</div>
<div class="t" style="left:737px;top:953.83px;font-size:12.6px;color:#111;">29566.94</div>
<div class="t" style="left:799px;top:932.83px;font-size:12.6px;font-weight:bold;color:#111;">444</div>
<div class="t" style="left:799px;top:953.83px;font-size:12.6px;font-weight:bold;color:#111;">108355.79</div>
<div style="left:270px;top:74px;width:1px;height:890px;background:#000;"></div>
<div style="left:345px;top:95px;width:1px;height:869px;background:#000;"></div>
<div style="left:409px;top:95px;width:1px;height:869px;background:#000;"></div>
<div style="left:473px;top:95px;width:1px;height:869px;background:#000;"></div>
<div style="left:570px;top:95px;width:1px;height:869px;background:#000;"></div>
<div style="left:624px;top:95px;width:1px;height:869px;background:#000;"></div>
<div style="left:671px;top:95px;width:1px;height:869px;background:#000;"></div>
<div style="left:733px;top:95px;width:1px;height:869px;background:#000;"></div>
<div style="left:795px;top:95px;width:1px;height:869px;background:#000;"></div>
<div style="left:864px;top:74px;width:1px;height:890px;background:#000;"></div>
<div style="left:270px;top:74px;width:595px;height:1px;background:#000;"></div>
<div style="left:270px;top:95px;width:595px;height:1px;background:#000;"></div>
<div style="left:270px;top:116px;width:595px;height:1px;background:#000;"></div>
<div style="left:345px;top:137px;width:520px;height:1px;background:#000;"></div>
<div style="left:270px;top:158px;width:595px;height:1px;background:#000;"></div>
<div style="left:345px;top:179px;width:520px;height:1px;background:#000;"></div>
<div style="left:270px;top:200px;width:595px;height:1px;background:#000;"></div>
<div style="left:345px;top:221px;width:520px;height:1px;background:#000;"></div>
<div style="left:270px;top:242px;width:595px;height:1px;background:#000;"></div>
<div style="left:345px;top:263px;width:520px;height:1px;background:#000;"></div>
<div style="left:270px;top:284px;width:595px;height:1px;background:#000;"></div>
<div style="left:345px;top:305px;width:520px;height:1px;background:#000;"></div>
<div style="left:270px;top:326px;width:595px;height:1px;background:#000;"></div>
<div style="left:345px;top:347px;width:520px;height:1px;background:#000;"></div>
<div style="left:270px;top:368px;width:595px;height:1px;background:#000;"></div>
<div style="left:345px;top:389px;width:520px;height:1px;background:#000;"></div>
<div style="left:270px;top:410px;width:595px;height:1px;background:#000;"></div>
<div style="left:345px;top:431px;width:520px;height:1px;background:#000;"></div>
<div style="left:270px;top:452px;width:595px;height:1px;background:#000;"></div>
<div style="left:345px;top:473px;width:520px;height:1px;background:#000;"></div>
<div style="left:270px;top:494px;width:595px;height:1px;background:#000;"></div>
<div style="left:345px;top:515px;width:520px;height:1px;background:#000;"></div>
<div style="left:270px;top:536px;width:595px;height:1px;background:#000;"></div>
<div style="left:345px;top:557px;width:520px;height:1px;background:#000;"></div>
<div style="left:270px;top:578px;width:595px;height:1px;background:#000;"></div>
<div style="left:345px;top:599px;width:520px;height:1px;background:#000;"></div>
<div style="left:270px;top:620px;width:595px;height:1px;background:#000;"></div>
<div style="left:345px;top:641px;width:520px;height:1px;background:#000;"></div>
<div style="left:270px;top:662px;width:595px;height:1px;background:#000;"></div>
<div style="left:345px;top:683px;width:520px;height:1px;background:#000;"></div>
<div style="left:270px;top:704px;width:595px;height:1px;background:#000;"></div>
<div style="left:345px;top:725px;width:520px;height:1px;background:#000;"></div>
<div style="left:270px;top:746px;width:595px;height:1px;background:#000;"></div>
<div style="left:345px;top:767px;width:520px;height:1px;background:#000;"></div>
<div style="left:270px;top:788px;width:595px;height:1px;background:#000;"></div>
<div style="left:345px;top:809px;width:520px;height:1px;background:#000;"></div>
<div style="left:270px;top:830px;width:595px;height:1px;background:#000;"></div>
<div style="left:345px;top:851px;width:520px;height:1px;background:#000;"></div>
<div style="left:270px;top:872px;width:595px;height:1px;background:#000;"></div>
<div style="left:345px;top:893px;width:520px;height:1px;background:#000;"></div>
<div style="left:270px;top:914px;width:595px;height:1px;background:#000;"></div>
<div style="left:270px;top:921px;width:595px;height:1px;background:#000;"></div>
<div style="left:270px;top:942px;width:595px;height:1px;background:#000;"></div>
<div style="left:270px;top:963px;width:595px;height:1px;background:#000;"></div>
<div style="left:271px;top:915px;width:593px;height:6px;background:#00a9e6;"></div>
<div style="left:866px;top:75px;width:130px;height:20px;background:#00a9e6;"></div>
<div class="t" style="left:869px;top:107.57px;font-size:12.2px;color:#111;">Data\Filiala</div>
<div class="t" style="left:944px;top:107.61px;font-size:12.1px;color:#111;">DROCHIA</div>
<div style="left:941px;top:117px;width:55px;height:20px;background:#ddebf7;"></div>
<div style="left:941px;top:138px;width:55px;height:20px;background:#c6e0b4;"></div>
<div class="t" style="left:869.3px;top:138.03px;font-size:12.9px;color:#111;">02.01.2019</div>
<div class="t" style="left:944px;top:128.23px;font-size:12.6px;color:#111;">7</div>
<div class="t" style="left:944px;top:149.23px;font-size:12.6px;color:#111;">1713</div>
<div style="left:941px;top:159px;width:55px;height:20px;background:#ddebf7;"></div>
<div style="left:941px;top:180px;width:55px;height:20px;background:#c6e0b4;"></div>
<div class="t" style="left:869.3px;top:180.03px;font-size:12.9px;color:#111;">03.01.2019</div>
<div class="t" style="left:944px;top:170.23px;font-size:12.6px;color:#111;">7</div>
<div class="t" style="left:944px;top:191.23px;font-size:12.6px;color:#111;">1963.73</div>
<div style="left:941px;top:201px;width:55px;height:20px;background:#ddebf7;"></div>
<div style="left:941px;top:222px;width:55px;height:20px;background:#c6e0b4;"></div>
<div class="t" style="left:869.3px;top:222.03px;font-size:12.9px;color:#111;">04.01.2019</div>
<div class="t" style="left:944px;top:212.23px;font-size:12.6px;color:#111;">12</div>
<div class="t" style="left:944px;top:233.23px;font-size:12.6px;color:#111;">1667.69</div>
<div style="left:941px;top:243px;width:55px;height:20px;background:#ddebf7;"></div>
<div style="left:941px;top:264px;width:55px;height:20px;background:#c6e0b4;"></div>
<div class="t" style="left:869.3px;top:264.03px;font-size:12.9px;color:#111;">05.01.2019</div>
<div class="t" style="left:944px;top:254.23px;font-size:12.6px;color:#111;">4</div>
<div class="t" style="left:944px;top:275.23px;font-size:12.6px;color:#111;">1014.19</div>
<div style="left:941px;top:285px;width:55px;height:20px;background:#ddebf7;"></div>
<div style="left:941px;top:306px;width:55px;height:20px;background:#c6e0b4;"></div>
<div class="t" style="left:869.3px;top:306.03px;font-size:12.9px;color:#111;">06.01.2019</div>
<div class="t" style="left:944px;top:296.23px;font-size:12.6px;color:#111;">1</div>
<div class="t" style="left:944px;top:317.23px;font-size:12.6px;color:#111;">235.19</div>
<div style="left:941px;top:327px;width:55px;height:20px;background:#ddebf7;"></div>
<div style="left:941px;top:348px;width:55px;height:20px;background:#c6e0b4;"></div>
<div class="t" style="left:869.3px;top:348.03px;font-size:12.9px;color:#111;">07.01.2019</div>
<div style="left:941px;top:369px;width:55px;height:20px;background:#ddebf7;"></div>
<div style="left:941px;top:390px;width:55px;height:20px;background:#c6e0b4;"></div>
<div class="t" style="left:869.3px;top:390.03px;font-size:12.9px;color:#111;">08.01.2019</div>
<div class="t" style="left:944px;top:380.23px;font-size:12.6px;color:#111;">17</div>
<div class="t" style="left:944px;top:401.23px;font-size:12.6px;color:#111;">-2102.62</div>
<div style="left:941px;top:411px;width:55px;height:20px;background:#ddebf7;"></div>
<div style="left:941px;top:432px;width:55px;height:20px;background:#c6e0b4;"></div>
<div class="t" style="left:869.3px;top:432.03px;font-size:12.9px;color:#111;">09.01.2019</div>
<div class="t" style="left:944px;top:422.23px;font-size:12.6px;color:#111;">10</div>
<div class="t" style="left:944px;top:443.23px;font-size:12.6px;color:#111;">2302.56</div>
<div style="left:941px;top:453px;width:55px;height:20px;background:#ddebf7;"></div>
<div style="left:941px;top:474px;width:55px;height:20px;background:#c6e0b4;"></div>
<div class="t" style="left:869.3px;top:474.03px;font-size:12.9px;color:#111;">10.01.2019</div>
<div class="t" style="left:944px;top:464.23px;font-size:12.6px;color:#111;">1</div>
<div class="t" style="left:944px;top:485.23px;font-size:12.6px;color:#111;">421</div>
<div style="left:941px;top:495px;width:55px;height:20px;background:#ddebf7;"></div>
<div style="left:941px;top:516px;width:55px;height:20px;background:#c6e0b4;"></div>
<div class="t" style="left:869.3px;top:516.03px;font-size:12.9px;color:#111;">11.01.2019</div>
<div class="t" style="left:944px;top:506.23px;font-size:12.6px;color:#111;">7</div>
<div class="t" style="left:944px;top:527.23px;font-size:12.6px;color:#111;">1358</div>
<div style="left:941px;top:537px;width:55px;height:20px;background:#ddebf7;"></div>
<div style="left:941px;top:558px;width:55px;height:20px;background:#c6e0b4;"></div>
<div class="t" style="left:869.3px;top:558.03px;font-size:12.9px;color:#111;">12.01.2019</div>
<div class="t" style="left:944px;top:548.23px;font-size:12.6px;color:#111;">12</div>
<div class="t" style="left:944px;top:569.23px;font-size:12.6px;color:#111;">1251.9</div>
<div style="left:941px;top:579px;width:55px;height:20px;background:#ddebf7;"></div>
<div style="left:941px;top:600px;width:55px;height:20px;background:#c6e0b4;"></div>
<div class="t" style="left:869.3px;top:600.03px;font-size:12.9px;color:#111;">13.01.2019</div>
<div class="t" style="left:944px;top:590.23px;font-size:12.6px;color:#111;">9</div>
<div class="t" style="left:944px;top:611.23px;font-size:12.6px;color:#111;">1547.34</div>
<div style="left:941px;top:621px;width:55px;height:20px;background:#ddebf7;"></div>
<div style="left:941px;top:642px;width:55px;height:20px;background:#c6e0b4;"></div>
<div class="t" style="left:869.3px;top:642.03px;font-size:12.9px;color:#111;">14.01.2019</div>
<div class="t" style="left:944px;top:632.23px;font-size:12.6px;color:#111;">6</div>
<div class="t" style="left:944px;top:653.23px;font-size:12.6px;color:#111;">1829.95</div>
<div style="left:941px;top:663px;width:55px;height:20px;background:#ddebf7;"></div>
<div style="left:941px;top:684px;width:55px;height:20px;background:#c6e0b4;"></div>
<div class="t" style="left:869.3px;top:684.03px;font-size:12.9px;color:#111;">15.01.2019</div>
<div class="t" style="left:944px;top:674.23px;font-size:12.6px;color:#111;">8</div>
<div class="t" style="left:944px;top:695.23px;font-size:12.6px;color:#111;">830.64</div>
<div style="left:941px;top:705px;width:55px;height:20px;background:#ddebf7;"></div>
<div style="left:941px;top:726px;width:55px;height:20px;background:#c6e0b4;"></div>
<div class="t" style="left:869.3px;top:726.03px;font-size:12.9px;color:#111;">16.01.2019</div>
<div class="t" style="left:944px;top:716.23px;font-size:12.6px;color:#111;">6</div>
<div class="t" style="left:944px;top:737.23px;font-size:12.6px;color:#111;">802</div>
<div style="left:941px;top:747px;width:55px;height:20px;background:#ddebf7;"></div>
<div style="left:941px;top:768px;width:55px;height:20px;background:#c6e0b4;"></div>
<div class="t" style="left:869.3px;top:768.03px;font-size:12.9px;color:#111;">17.01.2019</div>
<div class="t" style="left:944px;top:758.23px;font-size:12.6px;color:#111;">4</div>
<div class="t" style="left:944px;top:779.23px;font-size:12.6px;color:#111;">1331.52</div>
<div style="left:941px;top:789px;width:55px;height:20px;background:#ddebf7;"></div>
<div style="left:941px;top:810px;width:55px;height:20px;background:#c6e0b4;"></div>
<div class="t" style="left:869.3px;top:810.03px;font-size:12.9px;color:#111;">18.01.2019</div>
<div class="t" style="left:944px;top:800.23px;font-size:12.6px;color:#111;">10</div>
<div class="t" style="left:944px;top:821.23px;font-size:12.6px;color:#111;">87.53</div>
<div style="left:941px;top:831px;width:55px;height:20px;background:#ddebf7;"></div>
<div style="left:941px;top:852px;width:55px;height:20px;background:#c6e0b4;"></div>
<div class="t" style="left:869.3px;top:852.03px;font-size:12.9px;color:#111;">19.01.2019</div>
<div class="t" style="left:944px;top:842.23px;font-size:12.6px;color:#111;">3</div>
<div class="t" style="left:944px;top:863.23px;font-size:12.6px;color:#111;">647</div>
<div style="left:941px;top:873px;width:55px;height:20px;background:#ddebf7;"></div>
<div style="left:941px;top:894px;width:55px;height:20px;background:#c6e0b4;"></div>
<div class="t" style="left:869.3px;top:894.03px;font-size:12.9px;color:#111;">20.01.2019</div>
<div class="t" style="left:944px;top:884.23px;font-size:12.6px;color:#111;">3</div>
<div class="t" style="left:944px;top:905.23px;font-size:12.6px;color:#111;">-2847.38</div>
<div style="left:941px;top:915px;width:55px;height:20px;background:#ddebf7;"></div>
<div style="left:941px;top:936px;width:55px;height:20px;background:#c6e0b4;"></div>
<div class="t" style="left:869.3px;top:936.03px;font-size:12.9px;color:#111;">21.01.2019</div>
<div class="t" style="left:944px;top:926.23px;font-size:12.6px;color:#111;">11</div>
<div class="t" style="left:944px;top:947.23px;font-size:12.6px;color:#111;">-974.14</div>
<div style="left:941px;top:957px;width:55px;height:20px;background:#ddebf7;"></div>
<div style="left:941px;top:978px;width:55px;height:20px;background:#c6e0b4;"></div>
<div class="t" style="left:869.3px;top:978.03px;font-size:12.9px;color:#111;">22.01.2019</div>
<div class="t" style="left:944px;top:968.23px;font-size:12.6px;color:#111;">6</div>
<div style="left:865px;top:74px;width:1px;height:900px;background:#000;"></div>
<div style="left:940px;top:95px;width:1px;height:880px;background:#000;"></div>
<div style="left:865px;top:74px;width:130px;height:1px;background:#000;"></div>
<div style="left:865px;top:95px;width:130px;height:1px;background:#000;"></div>
<div style="left:865px;top:116px;width:130px;height:1px;background:#000;"></div>
<div style="left:940px;top:137px;width:60px;height:1px;background:#000;"></div>
<div style="left:865px;top:158px;width:130px;height:1px;background:#000;"></div>
<div style="left:940px;top:179px;width:60px;height:1px;background:#000;"></div>
<div style="left:865px;top:200px;width:130px;height:1px;background:#000;"></div>
<div style="left:940px;top:221px;width:60px;height:1px;background:#000;"></div>
<div style="left:865px;top:242px;width:130px;height:1px;background:#000;"></div>
<div style="left:940px;top:263px;width:60px;height:1px;background:#000;"></div>
<div style="left:865px;top:284px;width:130px;height:1px;background:#000;"></div>
<div style="left:940px;top:305px;width:60px;height:1px;background:#000;"></div>
<div style="left:865px;top:326px;width:130px;height:1px;background:#000;"></div>
<div style="left:940px;top:347px;width:60px;height:1px;background:#000;"></div>
<div style="left:865px;top:368px;width:130px;height:1px;background:#000;"></div>
<div style="left:940px;top:389px;width:60px;height:1px;background:#000;"></div>
<div style="left:865px;top:410px;width:130px;height:1px;background:#000;"></div>
<div style="left:940px;top:431px;width:60px;height:1px;background:#000;"></div>
<div style="left:865px;top:452px;width:130px;height:1px;background:#000;"></div>
<div style="left:940px;top:473px;width:60px;height:1px;background:#000;"></div>
<div style="left:865px;top:494px;width:130px;height:1px;background:#000;"></div>
<div style="left:940px;top:515px;width:60px;height:1px;background:#000;"></div>
<div style="left:865px;top:536px;width:130px;height:1px;background:#000;"></div>
<div style="left:940px;top:557px;width:60px;height:1px;background:#000;"></div>
<div style="left:865px;top:578px;width:130px;height:1px;background:#000;"></div>
<div style="left:940px;top:599px;width:60px;height:1px;background:#000;"></div>
<div style="left:865px;top:620px;width:130px;height:1px;background:#000;"></div>
<div style="left:940px;top:641px;width:60px;height:1px;background:#000;"></div>
<div style="left:865px;top:662px;width:130px;height:1px;background:#000;"></div>
<div style="left:940px;top:683px;width:60px;height:1px;background:#000;"></div>
<div style="left:865px;top:704px;width:130px;height:1px;background:#000;"></div>
<div style="left:940px;top:725px;width:60px;height:1px;background:#000;"></div>
<div style="left:865px;top:746px;width:130px;height:1px;background:#000;"></div>
<div style="left:940px;top:767px;width:60px;height:1px;background:#000;"></div>
<div style="left:865px;top:788px;width:130px;height:1px;background:#000;"></div>
<div style="left:940px;top:809px;width:60px;height:1px;background:#000;"></div>
<div style="left:865px;top:830px;width:130px;height:1px;background:#000;"></div>
<div style="left:940px;top:851px;width:60px;height:1px;background:#000;"></div>
<div style="left:865px;top:872px;width:130px;height:1px;background:#000;"></div>
<div style="left:940px;top:893px;width:60px;height:1px;background:#000;"></div>
<div style="left:865px;top:914px;width:130px;height:1px;background:#000;"></div>
<div style="left:940px;top:935px;width:60px;height:1px;background:#000;"></div>
<div style="left:865px;top:956px;width:130px;height:1px;background:#000;"></div>
<div style="left:940px;top:977px;width:60px;height:1px;background:#000;"></div>
<div style="left:865px;top:998px;width:130px;height:1px;background:#000;"></div>
<div id="xl">
<div style="left:1726px;top:0px;width:9px;height:970px;background:linear-gradient(to right,rgba(0,0,0,0.33),rgba(0,0,0,0.09) 50%,rgba(0,0,0,0));"></div>
<div style="left:986px;top:0px;width:7px;height:970px;background:linear-gradient(to left,rgba(0,0,0,0.30),rgba(0,0,0,0.07) 50%,rgba(0,0,0,0));"></div>
<div style="left:993px;top:0px;width:733px;height:970px;background:#e6e6e6;"></div>
<div style="left:993px;top:0px;width:1px;height:970px;background:#3a5e48;"></div>
<div style="left:994px;top:79px;width:1px;height:891px;background:#eef3ee;"></div>
<div style="left:1725px;top:0px;width:1px;height:970px;background:#3a5e48;"></div>
<div style="left:1724px;top:79px;width:1px;height:891px;background:#dff3e6;"></div>
<div style="left:994px;top:0px;width:731px;height:78px;background:#f3f3f3;"></div>
<div style="left:994px;top:78px;width:731px;height:1px;background:#d5d5d5;"></div>
<div style="left:1093px;top:0px;width:1px;height:74px;background:#dadada;"></div>
<div style="left:1139px;top:0px;width:1px;height:74px;background:#dadada;"></div>
<div style="left:1227px;top:0px;width:1px;height:74px;background:#dadada;"></div>
<div style="left:1271px;top:0px;width:1px;height:74px;background:#dadada;"></div>
<div style="left:1473px;top:0px;width:1px;height:74px;background:#dadada;"></div>
<div style="left:1520px;top:0px;width:1px;height:74px;background:#dadada;"></div>
<div style="left:1616px;top:0px;width:1px;height:74px;background:#dadada;"></div>
<div style="left:1013px;top:0px;width:24px;height:22px;background:#e9c37d;border-radius:0 0 2px 2px"></div>
<div style="left:1018px;top:-2px;width:14px;height:3px;background:#fff;border:1px solid #6a6a6a"></div>
<svg style="left:1026px;top:4px" width="16" height="21" viewBox="0 0 16 21"><path d="M1.5 1.5h8.5l4.5 4.5v13.5h-13z" fill="#fff" stroke="#6a6a6a" stroke-width="1"/><path d="M9.5 1.5v5h5" fill="none" stroke="#6a6a6a" stroke-width="1"/></svg>
<div class="t" style="left:1001.5px;top:34.62px;font-size:11.2px;color:#444;">Вставить</div>
<div style="left:1021.5px;top:48.0px;width:0;height:0;border-left:3.5px solid transparent;border-right:3.5px solid transparent;border-top:4px solid #6a6a6a"></div>
<svg style="left:1054px;top:-4px" width="18" height="12" viewBox="0 0 18 12"><path d="M5.5 7L9 0M12.5 7L9 0" stroke="#6a6a6a" stroke-width="1.3"/><circle cx="4.5" cy="8" r="2.8" fill="#fff" stroke="#5a8ac6" stroke-width="1.1"/><circle cx="12.5" cy="8" r="2.8" fill="#fff" stroke="#5a8ac6" stroke-width="1.1"/></svg>
<svg style="left:1054px;top:15px" width="18" height="16" viewBox="0 0 18 16"><path d="M1.5 1.5h5.5l1.5 1.5v8.5h-7z" fill="#fff" stroke="#6a6a6a"/><path d="M7.5 4.5h5l3 3v8h-8z" fill="#fff" stroke="#6a6a6a"/><path d="M3 4.5h3.5M3 7h3.5M3 9.5h2.5M9.5 9h4.5M9.5 11.5h4.5" stroke="#4a7ebb" stroke-width="0.9"/></svg>
<div style="left:1076.5px;top:21.75px;width:0;height:0;border-left:3.0px solid transparent;border-right:3.0px solid transparent;border-top:3.5px solid #6a6a6a"></div>
<svg style="left:1055px;top:38px" width="17" height="16" viewBox="0 0 17 16"><path d="M0.5 10 L6 5.5 L10.5 10.5 L6.5 14.5z" fill="#e8c07a"/><path d="M6 5.5 L11 1.8 L14 5.2 L10.5 10.5z" fill="#6a6a6a"/><path d="M11.5 2.8 L14 0.5 L16 2.5 L13.5 5z" fill="#6a6a6a"/></svg>
<div class="t" style="left:998px;top:69.19px;font-size:11.0px;color:#555;">Буфер обмена</div>
<svg style="left:1082px;top:66px" width="8" height="8" viewBox="0 0 8 8"><path d="M0.5 7V0.5H7" fill="none" stroke="#777"/><path d="M2.5 2.5L7 7M4 7h3V4" fill="none" stroke="#777"/></svg>
<div style="left:1101px;top:-2px;width:29px;height:21px;background:#fbfbfb;border:1px solid #d4d4d4"></div>
<div class="t" style="left:616.5px;width:1000px;text-align:center;top:32.95px;font-size:11.7px;color:#444;">Шрифт</div>
<div style="left:1113.0px;top:46.5px;width:0;height:0;border-left:3.5px solid transparent;border-right:3.5px solid transparent;border-top:4px solid #6a6a6a"></div>
<div style="left:1168px;top:-2px;width:29px;height:21px;background:#fbfbfb;border:1px solid #d4d4d4"></div>
<div class="t" style="left:683.5px;width:1000px;text-align:center;top:32.95px;font-size:11.7px;color:#444;">Выравнивание</div>
<div style="left:1180.0px;top:46.5px;width:0;height:0;border-left:3.5px solid transparent;border-right:3.5px solid transparent;border-top:4px solid #6a6a6a"></div>
<div style="left:1234px;top:-2px;width:29px;height:21px;background:#fbfbfb;border:1px solid #d4d4d4"></div>
<div class="t" style="left:749.5px;width:1000px;text-align:center;top:32.95px;font-size:11.7px;color:#444;">Число</div>
<div style="left:1246.0px;top:46.5px;width:0;height:0;border-left:3.5px solid transparent;border-right:3.5px solid transparent;border-top:4px solid #6a6a6a"></div>
<div style="left:1481px;top:-2px;width:29px;height:21px;background:#fbfbfb;border:1px solid #d4d4d4"></div>
<div class="t" style="left:997.5px;width:1000px;text-align:center;top:32.95px;font-size:11.7px;color:#444;">Ячейки</div>
<div style="left:1494.0px;top:46.5px;width:0;height:0;border-left:3.5px solid transparent;border-right:3.5px solid transparent;border-top:4px solid #6a6a6a"></div>
<div style="left:1553px;top:-2px;width:29px;height:21px;background:#fbfbfb;border:1px solid #d4d4d4"></div>
<div class="t" style="left:1068.5px;width:1000px;text-align:center;top:32.95px;font-size:11.7px;color:#444;">Редактирование</div>
<div style="left:1565.0px;top:46.5px;width:0;height:0;border-left:3.5px solid transparent;border-right:3.5px solid transparent;border-top:4px solid #6a6a6a"></div>
<div class="t" style="left:1111px;top:3.52px;font-size:11.5px;font-weight:bold;color:#333;">A</div>
<div style="left:1109px;top:9px;width:16px;height:4px;background:#3f73b5;"></div>
<div style="left:1176.5px;top:0px;width:14px;height:1px;background:#6a6a6a;"></div>
<div style="left:1178.5px;top:3px;width:10px;height:1px;background:#6a6a6a;"></div>
<div style="left:1176.5px;top:6px;width:14px;height:1px;background:#6a6a6a;"></div>
<div style="left:1178.5px;top:9px;width:10px;height:1px;background:#6a6a6a;"></div>
<div class="t" style="left:750px;width:1000px;text-align:center;top:4.80px;font-size:15px;color:#555;">%</div>
<svg style="left:1489px;top:0px" width="15" height="10" viewBox="0 0 15 10"><rect x="0.5" y="0.5" width="14" height="8" fill="#fff" stroke="#666"/><path d="M0.5 3.5h14M0.5 6h14M5 0.5v8M10 0.5v8" stroke="#888" stroke-width="0.8"/><rect x="5" y="3.5" width="5" height="2.5" fill="#2f6fb5"/><path d="M1 9.5h13" stroke="#666"/></svg>
<svg style="left:1562px;top:-5px" width="14" height="16" viewBox="0 0 14 16"><circle cx="9" cy="6" r="4" fill="none" stroke="#3c70b2" stroke-width="1.8"/><path d="M6 9L2 13" stroke="#3c70b2" stroke-width="2.6" stroke-linecap="round"/></svg>
<svg style="left:1279px;top:-3px" width="17" height="16" viewBox="0 0 17 16"><rect x="0" y="3" width="4.5" height="5" fill="#d24726"/><rect x="6.5" y="0.5" width="9.5" height="10" fill="#fff" stroke="#666"/><path d="M8.5 4.5h5M8.5 7h5M12.5 2.5L9.5 9" stroke="#444" stroke-width="1"/></svg>
<svg style="left:1279px;top:15px" width="17" height="17" viewBox="0 0 17 17"><rect x="0.5" y="0.5" width="15" height="11" fill="#fff" stroke="#777"/><rect x="1" y="4.5" width="9" height="7" fill="#c9d9ea"/><path d="M0.5 4h15M0.5 8h15M5.5 0.5v11M10.5 0.5v11" stroke="#999" stroke-width="0.8"/><path d="M16.5 4.5 L9.5 12 L7.5 10.5 L14.5 3z" fill="#6b6b6b"/><path d="M7.2 10.8 Q3.5 11.5 3 16.5 Q7.5 16 9.3 12.3z" fill="#3d7cc0"/></svg>
<svg style="left:1279px;top:38px" width="17" height="17" viewBox="0 0 17 17"><rect x="0.5" y="0.5" width="15" height="11" fill="#fff" stroke="#777"/><rect x="1" y="4.5" width="9" height="7" fill="#c9d9ea"/><path d="M0.5 4h15M0.5 8h15M5.5 0.5v11M10.5 0.5v11" stroke="#999" stroke-width="0.8"/><path d="M16.5 4.5 L9.5 12 L7.5 10.5 L14.5 3z" fill="#6b6b6b"/><path d="M7.2 10.8 Q3.5 11.5 3 16.5 Q7.5 16 9.3 12.3z" fill="#3d7cc0"/></svg>
<div class="t" style="left:1298px;top:0.88px;font-size:11.9px;color:#444;">Условное форматирование</div>
<div style="left:1453.0px;top:-0.75px;width:0;height:0;border-left:3.0px solid transparent;border-right:3.0px solid transparent;border-top:3.5px solid #6a6a6a"></div>
<div class="t" style="left:1298px;top:24.55px;font-size:11.97px;color:#444;">Форматировать как таблицу</div>
<div style="left:1455.5px;top:22.25px;width:0;height:0;border-left:3.0px solid transparent;border-right:3.0px solid transparent;border-top:3.5px solid #6a6a6a"></div>
<div class="t" style="left:1298px;top:48.08px;font-size:11.9px;color:#444;">Стили ячеек</div>
<div style="left:1369.0px;top:45.75px;width:0;height:0;border-left:3.0px solid transparent;border-right:3.0px solid transparent;border-top:3.5px solid #6a6a6a"></div>
<div class="t" style="left:872px;width:1000px;text-align:center;top:69.19px;font-size:11.0px;color:#555;">Стили</div>
<svg style="left:1705px;top:65px" width="11" height="8" viewBox="0 0 11 8"><path d="M1 6.5L5.5 2L10 6.5" fill="none" stroke="#6a6a6a" stroke-width="1.8"/></svg>
<div style="left:999px;top:89px;width:100px;height:24px;background:#fff;border:1px solid #c6c6c6"></div>
<div class="t" style="left:1006.5px;top:102.17px;font-size:12.5px;color:#222;">N19</div>
<div style="left:1086.5px;top:98.75px;width:0;height:0;border-left:4.0px solid transparent;border-right:4.0px solid transparent;border-top:4.5px solid #6a6a6a"></div>
<div style="left:1115.5px;top:97px;width:2px;height:2px;background:#9a9a9a;"></div>
<div style="left:1115.5px;top:101.5px;width:2px;height:2px;background:#9a9a9a;"></div>
<div style="left:1115.5px;top:106px;width:2px;height:2px;background:#9a9a9a;"></div>
<div style="left:1131px;top:89px;width:108px;height:24px;background:#fff;border:1px solid #c6c6c6"></div>
<svg style="left:1143px;top:96px" width="13" height="12" viewBox="0 0 13 12"><path d="M1.5 1L11.5 11M11.5 1L1.5 11" stroke="#b5b5b5" stroke-width="1.5"/></svg>
<svg style="left:1179px;top:96px" width="15" height="12" viewBox="0 0 15 12"><path d="M1 6L5 10L14 1.5" fill="none" stroke="#b5b5b5" stroke-width="1.8"/></svg>
<div class="t" style="left:1215px;top:102.15px;font-size:14px;color:#555;font-family:"Liberation Serif""><i>f<span style="font-size:10px">x</span></i></div>
<div style="left:1244px;top:89px;width:473px;height:24px;background:#fff;border:1px solid #c6c6c6"></div>
<svg style="left:1707px;top:98px" width="9" height="7" viewBox="0 0 9 7"><path d="M1 1.5L4.5 5L8 1.5" fill="none" stroke="#6a6a6a" stroke-width="2"/></svg>
<div style="left:1020px;top:145px;width:683px;height:780px;background:#fff;"></div>
<div style="left:994px;top:125px;width:707px;height:19px;background:#e6e6e6;"></div>
<div style="left:1124px;top:125px;width:1px;height:19px;background:#c6c6c6;"></div>
<div style="left:1188px;top:125px;width:1px;height:19px;background:#c6c6c6;"></div>
<div style="left:1252px;top:125px;width:1px;height:19px;background:#c6c6c6;"></div>
<div style="left:1316px;top:125px;width:1px;height:19px;background:#c6c6c6;"></div>
<div style="left:1380px;top:125px;width:1px;height:19px;background:#c6c6c6;"></div>
<div style="left:1444px;top:125px;width:1px;height:19px;background:#c6c6c6;"></div>
<div style="left:1508px;top:125px;width:1px;height:19px;background:#c6c6c6;"></div>
<div style="left:1572px;top:125px;width:1px;height:19px;background:#c6c6c6;"></div>
<div style="left:1636px;top:125px;width:1px;height:19px;background:#c6c6c6;"></div>
<div style="left:1700px;top:125px;width:1px;height:19px;background:#c6c6c6;"></div>
<div style="left:994px;top:144px;width:709px;height:1px;background:#ababab;"></div>
<div style="left:1019px;top:125px;width:1px;height:800px;background:#ababab;"></div>
<div style="left:1004px;top:129px;width:0;height:0;border-left:12px solid transparent;border-bottom:12px solid #bdbdbd"></div>
<div class="t" style="left:572.0px;width:1000px;text-align:center;top:134.77px;font-size:12.2px;color:#333;">A</div>
<div class="t" style="left:656.5px;width:1000px;text-align:center;top:134.77px;font-size:12.2px;color:#333;">B</div>
<div class="t" style="left:720.5px;width:1000px;text-align:center;top:134.77px;font-size:12.2px;color:#333;">C</div>
<div class="t" style="left:784.5px;width:1000px;text-align:center;top:134.77px;font-size:12.2px;color:#333;">D</div>
<div class="t" style="left:848.5px;width:1000px;text-align:center;top:134.77px;font-size:12.2px;color:#333;">E</div>
<div class="t" style="left:912.5px;width:1000px;text-align:center;top:134.77px;font-size:12.2px;color:#333;">F</div>
<div class="t" style="left:976.5px;width:1000px;text-align:center;top:134.77px;font-size:12.2px;color:#333;">G</div>
<div class="t" style="left:1040.5px;width:1000px;text-align:center;top:134.77px;font-size:12.2px;color:#333;">H</div>
<div class="t" style="left:1104.5px;width:1000px;text-align:center;top:134.77px;font-size:12.2px;color:#333;">I</div>
<div class="t" style="left:1168.5px;width:1000px;text-align:center;top:134.77px;font-size:12.2px;color:#333;">J</div>
<div style="left:994px;top:164px;width:25px;height:1px;background:#c4c4c4;"></div>
<div style="left:1020px;top:164px;width:683px;height:1px;background:#d9d9d9;"></div>
<div style="left:994px;top:184px;width:25px;height:1px;background:#c4c4c4;"></div>
<div style="left:1020px;top:184px;width:683px;height:1px;background:#d9d9d9;"></div>
<div style="left:994px;top:204px;width:25px;height:1px;background:#c4c4c4;"></div>
<div style="left:1020px;top:204px;width:683px;height:1px;background:#d9d9d9;"></div>
<div style="left:994px;top:224px;width:25px;height:1px;background:#c4c4c4;"></div>
<div style="left:1020px;top:224px;width:683px;height:1px;background:#d9d9d9;"></div>
<div style="left:994px;top:244px;width:25px;height:1px;background:#c4c4c4;"></div>
<div style="left:1020px;top:244px;width:683px;height:1px;background:#d9d9d9;"></div>
<div style="left:994px;top:264px;width:25px;height:1px;background:#c4c4c4;"></div>
<div style="left:1020px;top:264px;width:683px;height:1px;background:#d9d9d9;"></div>
<div style="left:994px;top:284px;width:25px;height:1px;background:#c4c4c4;"></div>
<div style="left:1020px;top:284px;width:683px;height:1px;background:#d9d9d9;"></div>
<div style="left:994px;top:304px;width:25px;height:1px;background:#c4c4c4;"></div>
<div style="left:1020px;top:304px;width:683px;height:1px;background:#d9d9d9;"></div>
<div style="left:994px;top:324px;width:25px;height:1px;background:#c4c4c4;"></div>
<div style="left:1020px;top:324px;width:683px;height:1px;background:#d9d9d9;"></div>
<div style="left:994px;top:344px;width:25px;height:1px;background:#c4c4c4;"></div>
<div style="left:1020px;top:344px;width:683px;height:1px;background:#d9d9d9;"></div>
<div style="left:994px;top:364px;width:25px;height:1px;background:#c4c4c4;"></div>
<div style="left:1020px;top:364px;width:683px;height:1px;background:#d9d9d9;"></div>
<div style="left:994px;top:384px;width:25px;height:1px;background:#c4c4c4;"></div>
<div style="left:1020px;top:384px;width:683px;height:1px;background:#d9d9d9;"></div>
<div style="left:994px;top:404px;width:25px;height:1px;background:#c4c4c4;"></div>
<div style="left:1020px;top:404px;width:683px;height:1px;background:#d9d9d9;"></div>
<div style="left:994px;top:424px;width:25px;height:1px;background:#c4c4c4;"></div>
<div style="left:1020px;top:424px;width:683px;height:1px;background:#d9d9d9;"></div>
<div style="left:994px;top:444px;width:25px;height:1px;background:#c4c4c4;"></div>
<div style="left:1020px;top:444px;width:683px;height:1px;background:#d9d9d9;"></div>
<div style="left:994px;top:464px;width:25px;height:1px;background:#c4c4c4;"></div>
<div style="left:1020px;top:464px;width:683px;height:1px;background:#d9d9d9;"></div>
<div style="left:994px;top:484px;width:25px;height:1px;background:#c4c4c4;"></div>
<div style="left:1020px;top:484px;width:683px;height:1px;background:#d9d9d9;"></div>
<div style="left:994px;top:504px;width:25px;height:1px;background:#c4c4c4;"></div>
<div style="left:1020px;top:504px;width:683px;height:1px;background:#d9d9d9;"></div>
<div style="left:994px;top:524px;width:25px;height:1px;background:#c4c4c4;"></div>
<div style="left:1020px;top:524px;width:683px;height:1px;background:#d9d9d9;"></div>
<div style="left:994px;top:544px;width:25px;height:1px;background:#c4c4c4;"></div>
<div style="left:1020px;top:544px;width:683px;height:1px;background:#d9d9d9;"></div>
<div style="left:994px;top:564px;width:25px;height:1px;background:#c4c4c4;"></div>
<div style="left:1020px;top:564px;width:683px;height:1px;background:#d9d9d9;"></div>
<div style="left:994px;top:584px;width:25px;height:1px;background:#c4c4c4;"></div>
<div style="left:1020px;top:584px;width:683px;height:1px;background:#d9d9d9;"></div>
<div style="left:994px;top:604px;width:25px;height:1px;background:#c4c4c4;"></div>
<div style="left:1020px;top:604px;width:683px;height:1px;background:#d9d9d9;"></div>
<div style="left:994px;top:624px;width:25px;height:1px;background:#c4c4c4;"></div>
<div style="left:1020px;top:624px;width:683px;height:1px;background:#d9d9d9;"></div>
<div style="left:994px;top:644px;width:25px;height:1px;background:#c4c4c4;"></div>
<div style="left:1020px;top:644px;width:683px;height:1px;background:#d9d9d9;"></div>
<div style="left:994px;top:664px;width:25px;height:1px;background:#c4c4c4;"></div>
<div style="left:1020px;top:664px;width:683px;height:1px;background:#d9d9d9;"></div>
<div style="left:994px;top:684px;width:25px;height:1px;background:#c4c4c4;"></div>
<div style="left:1020px;top:684px;width:683px;height:1px;background:#d9d9d9;"></div>
<div style="left:994px;top:704px;width:25px;height:1px;background:#c4c4c4;"></div>
<div style="left:1020px;top:704px;width:683px;height:1px;background:#d9d9d9;"></div>
<div style="left:994px;top:724px;width:25px;height:1px;background:#c4c4c4;"></div>
<div style="left:1020px;top:724px;width:683px;height:1px;background:#d9d9d9;"></div>
<div style="left:994px;top:744px;width:25px;height:1px;background:#c4c4c4;"></div>
<div style="left:1020px;top:744px;width:683px;height:1px;background:#d9d9d9;"></div>
<div style="left:994px;top:764px;width:25px;height:1px;background:#c4c4c4;"></div>
<div style="left:1020px;top:764px;width:683px;height:1px;background:#d9d9d9;"></div>
<div style="left:994px;top:784px;width:25px;height:1px;background:#c4c4c4;"></div>
<div style="left:1020px;top:784px;width:683px;height:1px;background:#d9d9d9;"></div>
<div style="left:994px;top:804px;width:25px;height:1px;background:#c4c4c4;"></div>
<div style="left:1020px;top:804px;width:683px;height:1px;background:#d9d9d9;"></div>
<div style="left:994px;top:824px;width:25px;height:1px;background:#c4c4c4;"></div>
<div style="left:1020px;top:824px;width:683px;height:1px;background:#d9d9d9;"></div>
<div style="left:994px;top:844px;width:25px;height:1px;background:#c4c4c4;"></div>
<div style="left:1020px;top:844px;width:683px;height:1px;background:#d9d9d9;"></div>
<div style="left:994px;top:864px;width:25px;height:1px;background:#c4c4c4;"></div>
<div style="left:1020px;top:864px;width:683px;height:1px;background:#d9d9d9;"></div>
<div style="left:994px;top:884px;width:25px;height:1px;background:#c4c4c4;"></div>
<div style="left:1020px;top:884px;width:683px;height:1px;background:#d9d9d9;"></div>
<div style="left:994px;top:904px;width:25px;height:1px;background:#c4c4c4;"></div>
<div style="left:1020px;top:904px;width:683px;height:1px;background:#d9d9d9;"></div>
<div style="left:994px;top:924px;width:25px;height:1px;background:#c4c4c4;"></div>
<div style="left:1020px;top:924px;width:683px;height:1px;background:#d9d9d9;"></div>
<div style="left:1124px;top:145px;width:1px;height:780px;background:#dadada;"></div>
<div style="left:1188px;top:145px;width:1px;height:780px;background:#dadada;"></div>
<div style="left:1252px;top:145px;width:1px;height:780px;background:#dadada;"></div>
<div style="left:1316px;top:145px;width:1px;height:780px;background:#dadada;"></div>
<div style="left:1380px;top:145px;width:1px;height:780px;background:#dadada;"></div>
<div style="left:1444px;top:145px;width:1px;height:780px;background:#dadada;"></div>
<div style="left:1508px;top:145px;width:1px;height:780px;background:#dadada;"></div>
<div style="left:1572px;top:145px;width:1px;height:780px;background:#dadada;"></div>
<div style="left:1636px;top:145px;width:1px;height:780px;background:#dadada;"></div>
<div style="left:1700px;top:145px;width:1px;height:780px;background:#dadada;"></div>
<div style="left:1703px;top:145px;width:1px;height:780px;background:#a6a6a6;"></div>
<div style="left:1020px;top:145px;width:295px;height:19px;background:#fff;"></div>
<div style="left:994px;top:505px;width:25px;height:19px;background:#d2d2d2;"></div>
<div style="left:1017px;top:505px;width:3px;height:19px;background:#217346;"></div>
<div class="t" style="left:506.5px;width:1000px;text-align:center;top:156.17px;font-size:12.2px;color:#222;">1</div>
<div class="t" style="left:506.5px;width:1000px;text-align:center;top:176.17px;font-size:12.2px;color:#222;">2</div>
<div class="t" style="left:506.5px;width:1000px;text-align:center;top:196.17px;font-size:12.2px;color:#222;">3</div>
<div class="t" style="left:506.5px;width:1000px;text-align:center;top:216.17px;font-size:12.2px;color:#222;">4</div>
<div class="t" style="left:506.5px;width:1000px;text-align:center;top:236.17px;font-size:12.2px;color:#222;">5</div>
<div class="t" style="left:506.5px;width:1000px;text-align:center;top:256.17px;font-size:12.2px;color:#222;">6</div>
<div class="t" style="left:506.5px;width:1000px;text-align:center;top:276.17px;font-size:12.2px;color:#222;">7</div>
<div class="t" style="left:506.5px;width:1000px;text-align:center;top:296.17px;font-size:12.2px;color:#222;">8</div>
<div class="t" style="left:506.5px;width:1000px;text-align:center;top:316.17px;font-size:12.2px;color:#222;">9</div>
<div class="t" style="left:506.5px;width:1000px;text-align:center;top:336.17px;font-size:12.2px;color:#222;">10</div>
<div class="t" style="left:506.5px;width:1000px;text-align:center;top:356.17px;font-size:12.2px;color:#222;">11</div>
<div class="t" style="left:506.5px;width:1000px;text-align:center;top:376.17px;font-size:12.2px;color:#222;">12</div>
<div class="t" style="left:506.5px;width:1000px;text-align:center;top:396.17px;font-size:12.2px;color:#222;">13</div>
<div class="t" style="left:506.5px;width:1000px;text-align:center;top:416.17px;font-size:12.2px;color:#222;">14</div>
<div class="t" style="left:506.5px;width:1000px;text-align:center;top:436.17px;font-size:12.2px;color:#222;">15</div>
<div class="t" style="left:506.5px;width:1000px;text-align:center;top:456.17px;font-size:12.2px;color:#222;">16</div>
<div class="t" style="left:506.5px;width:1000px;text-align:center;top:476.17px;font-size:12.2px;color:#222;">17</div>
<div class="t" style="left:506.5px;width:1000px;text-align:center;top:496.17px;font-size:12.2px;color:#222;">18</div>
<div class="t" style="left:506.5px;width:1000px;text-align:center;top:516.17px;font-size:12.2px;color:#217346;">19</div>
<div class="t" style="left:506.5px;width:1000px;text-align:center;top:536.17px;font-size:12.2px;color:#222;">20</div>
<div class="t" style="left:506.5px;width:1000px;text-align:center;top:556.17px;font-size:12.2px;color:#222;">21</div>
<div class="t" style="left:506.5px;width:1000px;text-align:center;top:576.17px;font-size:12.2px;color:#222;">22</div>
<div class="t" style="left:506.5px;width:1000px;text-align:center;top:596.17px;font-size:12.2px;color:#222;">23</div>
<div class="t" style="left:506.5px;width:1000px;text-align:center;top:616.17px;font-size:12.2px;color:#222;">24</div>
<div class="t" style="left:506.5px;width:1000px;text-align:center;top:636.17px;font-size:12.2px;color:#222;">25</div>
<div class="t" style="left:506.5px;width:1000px;text-align:center;top:656.17px;font-size:12.2px;color:#222;">26</div>
<div class="t" style="left:506.5px;width:1000px;text-align:center;top:676.17px;font-size:12.2px;color:#222;">27</div>
<div class="t" style="left:506.5px;width:1000px;text-align:center;top:696.17px;font-size:12.2px;color:#222;">28</div>
<div class="t" style="left:506.5px;width:1000px;text-align:center;top:716.17px;font-size:12.2px;color:#222;">29</div>
<div class="t" style="left:506.5px;width:1000px;text-align:center;top:736.17px;font-size:12.2px;color:#222;">30</div>
<div class="t" style="left:506.5px;width:1000px;text-align:center;top:756.17px;font-size:12.2px;color:#222;">31</div>
<div class="t" style="left:506.5px;width:1000px;text-align:center;top:776.17px;font-size:12.2px;color:#222;">32</div>
<div class="t" style="left:506.5px;width:1000px;text-align:center;top:796.17px;font-size:12.2px;color:#222;">33</div>
<div class="t" style="left:506.5px;width:1000px;text-align:center;top:816.17px;font-size:12.2px;color:#222;">34</div>
<div class="t" style="left:506.5px;width:1000px;text-align:center;top:836.17px;font-size:12.2px;color:#222;">35</div>
<div class="t" style="left:506.5px;width:1000px;text-align:center;top:856.17px;font-size:12.2px;color:#222;">36</div>
<div class="t" style="left:506.5px;width:1000px;text-align:center;top:876.17px;font-size:12.2px;color:#222;">37</div>
<div class="t" style="left:506.5px;width:1000px;text-align:center;top:896.17px;font-size:12.2px;color:#222;">38</div>
<div class="t" style="left:506.5px;width:1000px;text-align:center;top:916.17px;font-size:12.2px;color:#222;">39</div>
<div class="t" style="left:1022px;top:155.87px;font-size:13.65px;color:#111;">Februarie 2019 (media profit pe zi - 5722.67 lei)</div>
<div class="t" style="left:1022px;top:176.27px;font-size:12.5px;color:#111;">Data</div>
<div class="t" style="left:1127px;top:176.27px;font-size:12.5px;color:#111;">DROCHIA</div>
<div class="t" style="left:1191px;top:176.27px;font-size:12.5px;color:#111;">FLORESTI</div>
<div style="left:1253px;top:168.6px;width:63px;height:16px;overflow:hidden"><div class="t" style="left:2px;top:7.67px;font-size:12.5px">GARA SOROCA</div></div>
<div class="t" style="left:1319px;top:176.27px;font-size:12.5px;color:#111;">OCNITA</div>
<div class="t" style="left:1383px;top:176.27px;font-size:12.5px;color:#111;">OTACI</div>
<div class="t" style="left:1447px;top:176.27px;font-size:12.5px;color:#111;">RISCANI</div>
<div class="t" style="left:1511px;top:176.27px;font-size:12.5px;color:#111;">SOROCA</div>
<div class="t" style="left:1575px;top:176.27px;font-size:12.5px;color:#111;"> Total zi</div>
<div class="t" style="left:121.5px;width:1000px;text-align:right;top:196.27px;font-size:12.5px;color:#111;">01.02.2019</div>
<div class="t" style="left:185.5px;width:1000px;text-align:right;top:196.27px;font-size:12.5px;color:#111;">10</div>
<div class="t" style="left:249.5px;width:1000px;text-align:right;top:196.27px;font-size:12.5px;color:#111;">17</div>
<div class="t" style="left:441.5px;width:1000px;text-align:right;top:196.27px;font-size:12.5px;color:#111;">1</div>
<div class="t" style="left:505.5px;width:1000px;text-align:right;top:196.27px;font-size:12.5px;color:#111;">5</div>
<div class="t" style="left:569.5px;width:1000px;text-align:right;top:196.27px;font-size:12.5px;color:#111;">16</div>
<div class="t" style="left:633.5px;width:1000px;text-align:right;top:196.27px;font-size:12.5px;color:#111;">49</div>
<div class="t" style="left:1127.5px;top:216.27px;font-size:12.5px;color:#111;">2802.95</div>
<div class="t" style="left:249.5px;width:1000px;text-align:right;top:216.27px;font-size:12.5px;color:#111;">4996</div>
<div class="t" style="left:441.5px;width:1000px;text-align:right;top:216.27px;font-size:12.5px;color:#111;">234</div>
<div class="t" style="left:1447.5px;top:216.27px;font-size:12.5px;color:#111;">2169.81</div>
<div class="t" style="left:1511.5px;top:216.27px;font-size:12.5px;color:#111;">3566.73</div>
<div class="t" style="left:1575.5px;top:216.27px;font-size:12.5px;color:#111;">13769.49</div>
<div class="t" style="left:121.5px;width:1000px;text-align:right;top:236.27px;font-size:12.5px;color:#111;">02.02.2019</div>
<div class="t" style="left:185.5px;width:1000px;text-align:right;top:236.27px;font-size:12.5px;color:#111;">5</div>
<div class="t" style="left:249.5px;width:1000px;text-align:right;top:236.27px;font-size:12.5px;color:#111;">3</div>
<div class="t" style="left:441.5px;width:1000px;text-align:right;top:236.27px;font-size:12.5px;color:#111;">2</div>
<div class="t" style="left:505.5px;width:1000px;text-align:right;top:236.27px;font-size:12.5px;color:#111;">7</div>
<div class="t" style="left:569.5px;width:1000px;text-align:right;top:236.27px;font-size:12.5px;color:#111;">7</div>
<div class="t" style="left:633.5px;width:1000px;text-align:right;top:236.27px;font-size:12.5px;color:#111;">24</div>
<div class="t" style="left:185.5px;width:1000px;text-align:right;top:256.27px;font-size:12.5px;color:#111;">1233</div>
<div class="t" style="left:249.5px;width:1000px;text-align:right;top:256.27px;font-size:12.5px;color:#111;">1097</div>
<div class="t" style="left:1383.5px;top:256.27px;font-size:12.5px;color:#111;">927.18</div>
<div class="t" style="left:1447.5px;top:256.27px;font-size:12.5px;color:#111;">3367.44</div>
<div class="t" style="left:1511.5px;top:256.27px;font-size:12.5px;color:#111;">1557.16</div>
<div class="t" style="left:1575.5px;top:256.27px;font-size:12.5px;color:#111;">8181.78</div>
<div class="t" style="left:121.5px;width:1000px;text-align:right;top:276.27px;font-size:12.5px;color:#111;">03.02.2019</div>
<div class="t" style="left:185.5px;width:1000px;text-align:right;top:276.27px;font-size:12.5px;color:#111;">7</div>
<div class="t" style="left:249.5px;width:1000px;text-align:right;top:276.27px;font-size:12.5px;color:#111;">2</div>
<div class="t" style="left:569.5px;width:1000px;text-align:right;top:276.27px;font-size:12.5px;color:#111;">3</div>
<div class="t" style="left:633.5px;width:1000px;text-align:right;top:276.27px;font-size:12.5px;color:#111;">12</div>
<div class="t" style="left:185.5px;width:1000px;text-align:right;top:296.27px;font-size:12.5px;color:#111;">984</div>
<div class="t" style="left:249.5px;width:1000px;text-align:right;top:296.27px;font-size:12.5px;color:#111;">424</div>
<div class="t" style="left:569.5px;width:1000px;text-align:right;top:296.27px;font-size:12.5px;color:#111;">940</div>
<div class="t" style="left:633.5px;width:1000px;text-align:right;top:296.27px;font-size:12.5px;color:#111;">2348</div>
<div class="t" style="left:121.5px;width:1000px;text-align:right;top:316.27px;font-size:12.5px;color:#111;">04.02.2019</div>
<div class="t" style="left:185.5px;width:1000px;text-align:right;top:316.27px;font-size:12.5px;color:#111;">7</div>
<div class="t" style="left:249.5px;width:1000px;text-align:right;top:316.27px;font-size:12.5px;color:#111;">2</div>
<div class="t" style="left:313.5px;width:1000px;text-align:right;top:316.27px;font-size:12.5px;color:#111;">2</div>
<div class="t" style="left:505.5px;width:1000px;text-align:right;top:316.27px;font-size:12.5px;color:#111;">4</div>
<div class="t" style="left:569.5px;width:1000px;text-align:right;top:316.27px;font-size:12.5px;color:#111;">11</div>
<div class="t" style="left:633.5px;width:1000px;text-align:right;top:316.27px;font-size:12.5px;color:#111;">26</div>
<div class="t" style="left:185.5px;width:1000px;text-align:right;top:336.27px;font-size:12.5px;color:#111;">1615</div>
<div class="t" style="left:249.5px;width:1000px;text-align:right;top:336.27px;font-size:12.5px;color:#111;">1254</div>
<div class="t" style="left:313.5px;width:1000px;text-align:right;top:336.27px;font-size:12.5px;color:#111;">269</div>
<div class="t" style="left:1447.5px;top:336.27px;font-size:12.5px;color:#111;">817.48</div>
<div class="t" style="left:1511.5px;top:336.27px;font-size:12.5px;color:#111;">2688.18</div>
<div class="t" style="left:1575.5px;top:336.27px;font-size:12.5px;color:#111;">6643.66</div>
<div class="t" style="left:121.5px;width:1000px;text-align:right;top:356.27px;font-size:12.5px;color:#111;">05.02.2019</div>
<div class="t" style="left:185.5px;width:1000px;text-align:right;top:356.27px;font-size:12.5px;color:#111;">7</div>
<div class="t" style="left:249.5px;width:1000px;text-align:right;top:356.27px;font-size:12.5px;color:#111;">2</div>
<div class="t" style="left:313.5px;width:1000px;text-align:right;top:356.27px;font-size:12.5px;color:#111;">4</div>
<div class="t" style="left:441.5px;width:1000px;text-align:right;top:356.27px;font-size:12.5px;color:#111;">3</div>
<div class="t" style="left:505.5px;width:1000px;text-align:right;top:356.27px;font-size:12.5px;color:#111;">6</div>
<div class="t" style="left:569.5px;width:1000px;text-align:right;top:356.27px;font-size:12.5px;color:#111;">16</div>
<div class="t" style="left:633.5px;width:1000px;text-align:right;top:356.27px;font-size:12.5px;color:#111;">38</div>
<div class="t" style="left:185.5px;width:1000px;text-align:right;top:376.27px;font-size:12.5px;color:#111;">1313</div>
<div class="t" style="left:249.5px;width:1000px;text-align:right;top:376.27px;font-size:12.5px;color:#111;">718</div>
<div class="t" style="left:313.5px;width:1000px;text-align:right;top:376.27px;font-size:12.5px;color:#111;">1107</div>
<div class="t" style="left:441.5px;width:1000px;text-align:right;top:376.27px;font-size:12.5px;color:#111;">466</div>
<div class="t" style="left:505.5px;width:1000px;text-align:right;top:376.27px;font-size:12.5px;color:#111;">2365</div>
<div class="t" style="left:1511.5px;top:376.27px;font-size:12.5px;color:#111;">3688.62</div>
<div class="t" style="left:1575.5px;top:376.27px;font-size:12.5px;color:#111;">9657.62</div>
<div class="t" style="left:121.5px;width:1000px;text-align:right;top:396.27px;font-size:12.5px;color:#111;">06.02.2019</div>
<div class="t" style="left:185.5px;width:1000px;text-align:right;top:396.27px;font-size:12.5px;color:#111;">5</div>
<div class="t" style="left:249.5px;width:1000px;text-align:right;top:396.27px;font-size:12.5px;color:#111;">4</div>
<div class="t" style="left:313.5px;width:1000px;text-align:right;top:396.27px;font-size:12.5px;color:#111;">2</div>
<div class="t" style="left:441.5px;width:1000px;text-align:right;top:396.27px;font-size:12.5px;color:#111;">2</div>
<div class="t" style="left:569.5px;width:1000px;text-align:right;top:396.27px;font-size:12.5px;color:#111;">11</div>
<div class="t" style="left:633.5px;width:1000px;text-align:right;top:396.27px;font-size:12.5px;color:#111;">24</div>
<div class="t" style="left:185.5px;width:1000px;text-align:right;top:416.27px;font-size:12.5px;color:#111;">1418</div>
<div class="t" style="left:249.5px;width:1000px;text-align:right;top:416.27px;font-size:12.5px;color:#111;">1092</div>
<div class="t" style="left:313.5px;width:1000px;text-align:right;top:416.27px;font-size:12.5px;color:#111;">437</div>
<div class="t" style="left:441.5px;width:1000px;text-align:right;top:416.27px;font-size:12.5px;color:#111;">937</div>
<div class="t" style="left:1511.5px;top:416.27px;font-size:12.5px;color:#111;">3073.49</div>
<div class="t" style="left:1575.5px;top:416.27px;font-size:12.5px;color:#111;">6957.49</div>
<div class="t" style="left:121.5px;width:1000px;text-align:right;top:436.27px;font-size:12.5px;color:#111;">07.02.2019</div>
<div class="t" style="left:185.5px;width:1000px;text-align:right;top:436.27px;font-size:12.5px;color:#111;">5</div>
<div class="t" style="left:249.5px;width:1000px;text-align:right;top:436.27px;font-size:12.5px;color:#111;">2</div>
<div class="t" style="left:313.5px;width:1000px;text-align:right;top:436.27px;font-size:12.5px;color:#111;">3</div>
<div class="t" style="left:377.5px;width:1000px;text-align:right;top:436.27px;font-size:12.5px;color:#111;">1</div>
<div class="t" style="left:441.5px;width:1000px;text-align:right;top:436.27px;font-size:12.5px;color:#111;">1</div>
<div class="t" style="left:505.5px;width:1000px;text-align:right;top:436.27px;font-size:12.5px;color:#111;">5</div>
<div class="t" style="left:569.5px;width:1000px;text-align:right;top:436.27px;font-size:12.5px;color:#111;">10</div>
<div class="t" style="left:633.5px;width:1000px;text-align:right;top:436.27px;font-size:12.5px;color:#111;">27</div>
<div class="t" style="left:185.5px;width:1000px;text-align:right;top:456.27px;font-size:12.5px;color:#111;">975</div>
<div class="t" style="left:249.5px;width:1000px;text-align:right;top:456.27px;font-size:12.5px;color:#111;">147</div>
<div class="t" style="left:313.5px;width:1000px;text-align:right;top:456.27px;font-size:12.5px;color:#111;">612</div>
<div class="t" style="left:377.5px;width:1000px;text-align:right;top:456.27px;font-size:12.5px;color:#111;">278</div>
<div class="t" style="left:441.5px;width:1000px;text-align:right;top:456.27px;font-size:12.5px;color:#111;">233</div>
<div class="t" style="left:505.5px;width:1000px;text-align:right;top:456.27px;font-size:12.5px;color:#111;">615</div>
<div class="t" style="left:1511.5px;top:456.27px;font-size:12.5px;color:#111;">1454.59</div>
<div class="t" style="left:1575.5px;top:456.27px;font-size:12.5px;color:#111;">4314.59</div>
<div class="t" style="left:121.5px;width:1000px;text-align:right;top:476.27px;font-size:12.5px;color:#111;">08.02.2019</div>
<div class="t" style="left:185.5px;width:1000px;text-align:right;top:476.27px;font-size:12.5px;color:#111;">7</div>
<div class="t" style="left:249.5px;width:1000px;text-align:right;top:476.27px;font-size:12.5px;color:#111;">2</div>
<div class="t" style="left:313.5px;width:1000px;text-align:right;top:476.27px;font-size:12.5px;color:#111;">3</div>
<div class="t" style="left:441.5px;width:1000px;text-align:right;top:476.27px;font-size:12.5px;color:#111;">2</div>
<div class="t" style="left:505.5px;width:1000px;text-align:right;top:476.27px;font-size:12.5px;color:#111;">11</div>
<div class="t" style="left:569.5px;width:1000px;text-align:right;top:476.27px;font-size:12.5px;color:#111;">6</div>
<div class="t" style="left:633.5px;width:1000px;text-align:right;top:476.27px;font-size:12.5px;color:#111;">31</div>
<div class="t" style="left:1127.5px;top:496.27px;font-size:12.5px;color:#111;">1809.81</div>
<div class="t" style="left:249.5px;width:1000px;text-align:right;top:496.27px;font-size:12.5px;color:#111;">782</div>
<div class="t" style="left:313.5px;width:1000px;text-align:right;top:496.27px;font-size:12.5px;color:#111;">1216</div>
<div class="t" style="left:1383.5px;top:496.27px;font-size:12.5px;color:#111;">655.62</div>
<div class="t" style="left:505.5px;width:1000px;text-align:right;top:496.27px;font-size:12.5px;color:#111;">1965</div>
<div class="t" style="left:1511.5px;top:496.27px;font-size:12.5px;color:#111;">1213.58</div>
<div class="t" style="left:1575.5px;top:496.27px;font-size:12.5px;color:#111;">7642.01</div>
<div class="t" style="left:121.5px;width:1000px;text-align:right;top:516.27px;font-size:12.5px;color:#111;">09.02.2019</div>
<div class="t" style="left:249.5px;width:1000px;text-align:right;top:516.27px;font-size:12.5px;color:#111;">2</div>
<div class="t" style="left:441.5px;width:1000px;text-align:right;top:516.27px;font-size:12.5px;color:#111;">2</div>
<div class="t" style="left:505.5px;width:1000px;text-align:right;top:516.27px;font-size:12.5px;color:#111;">5</div>
<div class="t" style="left:569.5px;width:1000px;text-align:right;top:516.27px;font-size:12.5px;color:#111;">4</div>
<div class="t" style="left:633.5px;width:1000px;text-align:right;top:516.27px;font-size:12.5px;color:#111;">13</div>
<div class="t" style="left:249.5px;width:1000px;text-align:right;top:536.27px;font-size:12.5px;color:#111;">456</div>
<div class="t" style="left:441.5px;width:1000px;text-align:right;top:536.27px;font-size:12.5px;color:#111;">461</div>
<div class="t" style="left:505.5px;width:1000px;text-align:right;top:536.27px;font-size:12.5px;color:#111;">800</div>
<div class="t" style="left:569.5px;width:1000px;text-align:right;top:536.27px;font-size:12.5px;color:#111;">666</div>
<div class="t" style="left:633.5px;width:1000px;text-align:right;top:536.27px;font-size:12.5px;color:#111;">2383</div>
<div class="t" style="left:121.5px;width:1000px;text-align:right;top:556.27px;font-size:12.5px;color:#111;">10.02.2019</div>
<div class="t" style="left:185.5px;width:1000px;text-align:right;top:556.27px;font-size:12.5px;color:#111;">1</div>
<div class="t" style="left:569.5px;width:1000px;text-align:right;top:556.27px;font-size:12.5px;color:#111;">8</div>
<div class="t" style="left:633.5px;width:1000px;text-align:right;top:556.27px;font-size:12.5px;color:#111;">9</div>
<div class="t" style="left:185.5px;width:1000px;text-align:right;top:576.27px;font-size:12.5px;color:#111;">257</div>
<div class="t" style="left:1511.5px;top:576.27px;font-size:12.5px;color:#111;">2134.9</div>
<div class="t" style="left:1575.5px;top:576.27px;font-size:12.5px;color:#111;">2391.9</div>
<div class="t" style="left:121.5px;width:1000px;text-align:right;top:596.27px;font-size:12.5px;color:#111;">11.02.2019</div>
<div class="t" style="left:185.5px;width:1000px;text-align:right;top:596.27px;font-size:12.5px;color:#111;">3</div>
<div class="t" style="left:249.5px;width:1000px;text-align:right;top:596.27px;font-size:12.5px;color:#111;">5</div>
<div class="t" style="left:313.5px;width:1000px;text-align:right;top:596.27px;font-size:12.5px;color:#111;">1</div>
<div class="t" style="left:505.5px;width:1000px;text-align:right;top:596.27px;font-size:12.5px;color:#111;">2</div>
<div class="t" style="left:569.5px;width:1000px;text-align:right;top:596.27px;font-size:12.5px;color:#111;">10</div>
<div class="t" style="left:633.5px;width:1000px;text-align:right;top:596.27px;font-size:12.5px;color:#111;">21</div>
<div class="t" style="left:1127.5px;top:616.27px;font-size:12.5px;color:#111;">1095.71</div>
<div class="t" style="left:249.5px;width:1000px;text-align:right;top:616.27px;font-size:12.5px;color:#111;">1902</div>
<div class="t" style="left:313.5px;width:1000px;text-align:right;top:616.27px;font-size:12.5px;color:#111;">208</div>
<div class="t" style="left:505.5px;width:1000px;text-align:right;top:616.27px;font-size:12.5px;color:#111;">520</div>
<div class="t" style="left:1511.5px;top:616.27px;font-size:12.5px;color:#111;">1235.07</div>
<div class="t" style="left:1575.5px;top:616.27px;font-size:12.5px;color:#111;">4960.78</div>
<div class="t" style="left:121.5px;width:1000px;text-align:right;top:636.27px;font-size:12.5px;color:#111;">12.02.2019</div>
<div class="t" style="left:185.5px;width:1000px;text-align:right;top:636.27px;font-size:12.5px;color:#111;">7</div>
<div class="t" style="left:249.5px;width:1000px;text-align:right;top:636.27px;font-size:12.5px;color:#111;">6</div>
<div class="t" style="left:313.5px;width:1000px;text-align:right;top:636.27px;font-size:12.5px;color:#111;">2</div>
<div class="t" style="left:505.5px;width:1000px;text-align:right;top:636.27px;font-size:12.5px;color:#111;">3</div>
<div class="t" style="left:569.5px;width:1000px;text-align:right;top:636.27px;font-size:12.5px;color:#111;">7</div>
<div class="t" style="left:633.5px;width:1000px;text-align:right;top:636.27px;font-size:12.5px;color:#111;">25</div>
<div class="t" style="left:1127.5px;top:656.27px;font-size:12.5px;color:#111;">1348.03</div>
<div class="t" style="left:1191.5px;top:656.27px;font-size:12.5px;color:#111;">1476.9</div>
<div class="t" style="left:1255.5px;top:656.27px;font-size:12.5px;color:#111;">678.45</div>
<div class="t" style="left:1447.5px;top:656.27px;font-size:12.5px;color:#111;">1403.25</div>
<div class="t" style="left:1511.5px;top:656.27px;font-size:12.5px;color:#111;">1080.41</div>
<div class="t" style="left:1575.5px;top:656.27px;font-size:12.5px;color:#111;">5987.04</div>
<div class="t" style="left:121.5px;width:1000px;text-align:right;top:676.27px;font-size:12.5px;color:#111;">13.02.2019</div>
<div class="t" style="left:185.5px;width:1000px;text-align:right;top:676.27px;font-size:12.5px;color:#111;">17</div>
<div class="t" style="left:249.5px;width:1000px;text-align:right;top:676.27px;font-size:12.5px;color:#111;">5</div>
<div class="t" style="left:313.5px;width:1000px;text-align:right;top:676.27px;font-size:12.5px;color:#111;">4</div>
<div class="t" style="left:505.5px;width:1000px;text-align:right;top:676.27px;font-size:12.5px;color:#111;">4</div>
<div class="t" style="left:569.5px;width:1000px;text-align:right;top:676.27px;font-size:12.5px;color:#111;">10</div>
<div class="t" style="left:633.5px;width:1000px;text-align:right;top:676.27px;font-size:12.5px;color:#111;">40</div>
<div class="t" style="left:1127.5px;top:696.27px;font-size:12.5px;color:#111;">4551.99</div>
<div class="t" style="left:249.5px;width:1000px;text-align:right;top:696.27px;font-size:12.5px;color:#111;">1337</div>
<div class="t" style="left:313.5px;width:1000px;text-align:right;top:696.27px;font-size:12.5px;color:#111;">808</div>
<div class="t" style="left:505.5px;width:1000px;text-align:right;top:696.27px;font-size:12.5px;color:#111;">938</div>
<div class="t" style="left:1511.5px;top:696.27px;font-size:12.5px;color:#111;">2347.52</div>
<div class="t" style="left:1575.5px;top:696.27px;font-size:12.5px;color:#111;">9982.51</div>
<div class="t" style="left:121.5px;width:1000px;text-align:right;top:716.27px;font-size:12.5px;color:#111;">14.02.2019</div>
<div class="t" style="left:185.5px;width:1000px;text-align:right;top:716.27px;font-size:12.5px;color:#111;">1</div>
<div class="t" style="left:249.5px;width:1000px;text-align:right;top:716.27px;font-size:12.5px;color:#111;">1</div>
<div class="t" style="left:313.5px;width:1000px;text-align:right;top:716.27px;font-size:12.5px;color:#111;">2</div>
<div class="t" style="left:505.5px;width:1000px;text-align:right;top:716.27px;font-size:12.5px;color:#111;">10</div>
<div class="t" style="left:569.5px;width:1000px;text-align:right;top:716.27px;font-size:12.5px;color:#111;">4</div>
<div class="t" style="left:633.5px;width:1000px;text-align:right;top:716.27px;font-size:12.5px;color:#111;">18</div>
<div class="t" style="left:1127.5px;top:736.27px;font-size:12.5px;color:#111;">343.73</div>
<div class="t" style="left:249.5px;width:1000px;text-align:right;top:736.27px;font-size:12.5px;color:#111;">206</div>
<div class="t" style="left:313.5px;width:1000px;text-align:right;top:736.27px;font-size:12.5px;color:#111;">198</div>
<div class="t" style="left:1447.5px;top:736.27px;font-size:12.5px;color:#111;">2184.61</div>
<div class="t" style="left:1511.5px;top:736.27px;font-size:12.5px;color:#111;">578.12</div>
<div class="t" style="left:1575.5px;top:736.27px;font-size:12.5px;color:#111;">3510.46</div>
<div class="t" style="left:121.5px;width:1000px;text-align:right;top:756.27px;font-size:12.5px;color:#111;">15.02.2019</div>
<div class="t" style="left:185.5px;width:1000px;text-align:right;top:756.27px;font-size:12.5px;color:#111;">7</div>
<div class="t" style="left:249.5px;width:1000px;text-align:right;top:756.27px;font-size:12.5px;color:#111;">3</div>
<div class="t" style="left:313.5px;width:1000px;text-align:right;top:756.27px;font-size:12.5px;color:#111;">2</div>
<div class="t" style="left:377.5px;width:1000px;text-align:right;top:756.27px;font-size:12.5px;color:#111;">2</div>
<div class="t" style="left:441.5px;width:1000px;text-align:right;top:756.27px;font-size:12.5px;color:#111;">3</div>
<div class="t" style="left:505.5px;width:1000px;text-align:right;top:756.27px;font-size:12.5px;color:#111;">6</div>
<div class="t" style="left:569.5px;width:1000px;text-align:right;top:756.27px;font-size:12.5px;color:#111;">4</div>
<div class="t" style="left:633.5px;width:1000px;text-align:right;top:756.27px;font-size:12.5px;color:#111;">27</div>
<div class="t" style="left:1127.5px;top:776.27px;font-size:12.5px;color:#111;">1441.57</div>
<div class="t" style="left:1191.5px;top:776.27px;font-size:12.5px;color:#111;">661.01</div>
<div class="t" style="left:1255.5px;top:776.27px;font-size:12.5px;color:#111;">965.67</div>
<div class="t" style="left:377.5px;width:1000px;text-align:right;top:776.27px;font-size:12.5px;color:#111;">353</div>
<div class="t" style="left:441.5px;width:1000px;text-align:right;top:776.27px;font-size:12.5px;color:#111;">276</div>
<div class="t" style="left:1447.5px;top:776.27px;font-size:12.5px;color:#111;">1797.3</div>
<div class="t" style="left:1511.5px;top:776.27px;font-size:12.5px;color:#111;">1101.82</div>
<div class="t" style="left:1575.5px;top:776.27px;font-size:12.5px;color:#111;">6596.37</div>
<div class="t" style="left:121.5px;width:1000px;text-align:right;top:796.27px;font-size:12.5px;color:#111;">16.02.2019</div>
<div class="t" style="left:185.5px;width:1000px;text-align:right;top:796.27px;font-size:12.5px;color:#111;">3</div>
<div class="t" style="left:249.5px;width:1000px;text-align:right;top:796.27px;font-size:12.5px;color:#111;">11</div>
<div class="t" style="left:505.5px;width:1000px;text-align:right;top:796.27px;font-size:12.5px;color:#111;">7</div>
<div class="t" style="left:569.5px;width:1000px;text-align:right;top:796.27px;font-size:12.5px;color:#111;">2</div>
<div class="t" style="left:633.5px;width:1000px;text-align:right;top:796.27px;font-size:12.5px;color:#111;">23</div>
<div class="t" style="left:1127.5px;top:816.27px;font-size:12.5px;color:#111;">549.99</div>
<div class="t" style="left:1191.5px;top:816.27px;font-size:12.5px;color:#111;">3088.64</div>
<div class="t" style="left:1447.5px;top:816.27px;font-size:12.5px;color:#111;">2102.52</div>
<div class="t" style="left:569.5px;width:1000px;text-align:right;top:816.27px;font-size:12.5px;color:#111;">549</div>
<div class="t" style="left:1575.5px;top:816.27px;font-size:12.5px;color:#111;">6290.15</div>
<div class="t" style="left:121.5px;width:1000px;text-align:right;top:836.27px;font-size:12.5px;color:#111;">17.02.2019</div>
<div class="t" style="left:185.5px;width:1000px;text-align:right;top:836.27px;font-size:12.5px;color:#111;">6</div>
<div class="t" style="left:249.5px;width:1000px;text-align:right;top:836.27px;font-size:12.5px;color:#111;">1</div>
<div class="t" style="left:441.5px;width:1000px;text-align:right;top:836.27px;font-size:12.5px;color:#111;">1</div>
<div class="t" style="left:569.5px;width:1000px;text-align:right;top:836.27px;font-size:12.5px;color:#111;">2</div>
<div class="t" style="left:633.5px;width:1000px;text-align:right;top:836.27px;font-size:12.5px;color:#111;">10</div>
<div class="t" style="left:249.5px;width:1000px;text-align:right;top:856.27px;font-size:12.5px;color:#111;">344</div>
<div class="t" style="left:441.5px;width:1000px;text-align:right;top:856.27px;font-size:12.5px;color:#111;">657</div>
<div class="t" style="left:569.5px;width:1000px;text-align:right;top:856.27px;font-size:12.5px;color:#111;">609</div>
<div class="t" style="left:633.5px;width:1000px;text-align:right;top:856.27px;font-size:12.5px;color:#111;">1610</div>
<div class="t" style="left:121.5px;width:1000px;text-align:right;top:876.27px;font-size:12.5px;color:#111;">18.02.2019</div>
<div class="t" style="left:185.5px;width:1000px;text-align:right;top:876.27px;font-size:12.5px;color:#111;">4</div>
<div class="t" style="left:249.5px;width:1000px;text-align:right;top:876.27px;font-size:12.5px;color:#111;">3</div>
<div class="t" style="left:505.5px;width:1000px;text-align:right;top:876.27px;font-size:12.5px;color:#111;">7</div>
<div class="t" style="left:569.5px;width:1000px;text-align:right;top:876.27px;font-size:12.5px;color:#111;">3</div>
<div class="t" style="left:633.5px;width:1000px;text-align:right;top:876.27px;font-size:12.5px;color:#111;">17</div>
<div class="t" style="left:185.5px;width:1000px;text-align:right;top:896.27px;font-size:12.5px;color:#111;">799</div>
<div class="t" style="left:1191.5px;top:896.27px;font-size:12.5px;color:#111;">713.27</div>
<div class="t" style="left:1447.5px;top:896.27px;font-size:12.5px;color:#111;">1262.92</div>
<div class="t" style="left:1511.5px;top:896.27px;font-size:12.5px;color:#111;">665.12</div>
<div class="t" style="left:1575.5px;top:896.27px;font-size:12.5px;color:#111;">3440.31</div>
<div class="t" style="left:121.5px;width:1000px;text-align:right;top:916.27px;font-size:12.5px;color:#111;">19.02.2019</div>
<div class="t" style="left:185.5px;width:1000px;text-align:right;top:916.27px;font-size:12.5px;color:#111;">6</div>
<div class="t" style="left:249.5px;width:1000px;text-align:right;top:916.27px;font-size:12.5px;color:#111;">1</div>
<div class="t" style="left:441.5px;width:1000px;text-align:right;top:916.27px;font-size:12.5px;color:#111;">2</div>
<div class="t" style="left:569.5px;width:1000px;text-align:right;top:916.27px;font-size:12.5px;color:#111;">2</div>
<div class="t" style="left:633.5px;width:1000px;text-align:right;top:916.27px;font-size:12.5px;color:#111;">11</div>
<div style="left:1707px;top:126px;width:14px;height:799px;background:#dadada;"></div>
<div style="left:1707px;top:127px;width:13px;height:14px;background:#fff;border:1px solid #c6c6c6;box-sizing:border-box;width:15px;height:15px"></div>
<div style="left:1710.5px;top:131.75px;width:0;height:0;border-left:4.0px solid transparent;border-right:4.0px solid transparent;border-bottom:4.5px solid #6a6a6a"></div>
<div style="left:1707px;top:142px;width:15px;height:269px;background:#fff;border:1px solid #b0b0b0;box-sizing:border-box"></div>
<div style="left:1707px;top:911px;width:15px;height:15px;background:#fff;border:1px solid #c6c6c6;box-sizing:border-box"></div>
<div style="left:1710.5px;top:916.25px;width:0;height:0;border-left:4.0px solid transparent;border-right:4.0px solid transparent;border-top:4.5px solid #6a6a6a"></div>
<div style="left:994px;top:925px;width:709px;height:1px;background:#a8a8a8;"></div>
<div style="left:994px;top:926px;width:731px;height:27px;background:#e6e6e6;"></div>
<div style="left:1019px;top:935px;width:0;height:0;border-top:3.5px solid transparent;border-bottom:3.5px solid transparent;border-right:5px solid #b9b9b9"></div>
<div style="left:1050px;top:935px;width:0;height:0;border-top:3.5px solid transparent;border-bottom:3.5px solid transparent;border-left:5px solid #b9b9b9"></div>
<div style="left:1094px;top:925px;width:220px;height:23px;background:#fff;border-left:1px solid #c6c6c6;border-right:1px solid #c6c6c6"></div>
<div style="left:1094px;top:947px;width:222px;height:3px;background:#217346;"></div>
<div class="t" style="left:1106.5px;top:938.49px;font-size:13.03px;font-weight:bold;color:#217346;">bilete-raport-complex-19.02.201</div>
<svg style="left:1347px;top:930px" width="18" height="18" viewBox="0 0 18 18"><circle cx="9" cy="9" r="7.5" fill="none" stroke="#777" stroke-width="1.2"/><path d="M9 4.5v9M4.5 9h9" stroke="#666" stroke-width="1.8"/></svg>
<div style="left:1432px;top:934px;width:2px;height:2px;background:#9a9a9a;"></div>
<div style="left:1432px;top:938px;width:2px;height:2px;background:#9a9a9a;"></div>
<div style="left:1432px;top:942px;width:2px;height:2px;background:#9a9a9a;"></div>
<div style="left:1449px;top:932px;width:254px;height:14px;background:#dadada;"></div>
<div style="left:1449px;top:932px;width:14px;height:14px;background:#fff;border:1px solid #c6c6c6;box-sizing:border-box;width:15px;height:15px"></div>
<div style="left:1453px;top:935px;width:0;height:0;border-top:4px solid transparent;border-bottom:4px solid transparent;border-right:5px solid #6a6a6a"></div>
<div style="left:1463px;top:932px;width:203px;height:15px;background:#fff;border:1px solid #c6c6c6;box-sizing:border-box"></div>
<div style="left:1689px;top:932px;width:15px;height:15px;background:#fff;border:1px solid #c6c6c6;box-sizing:border-box"></div>
<div style="left:1695px;top:935px;width:0;height:0;border-top:4px solid transparent;border-bottom:4px solid transparent;border-left:5px solid #6a6a6a"></div>
<div style="left:994px;top:953px;width:731px;height:1px;background:#d0d0d0;"></div>
<div style="left:994px;top:954px;width:731px;height:16px;background:#f3f3f3;"></div>
<div class="t" style="left:1001.8px;top:963.72px;font-size:11.5px;color:#444;">Готово</div>
<div style="left:1422px;top:954px;width:38px;height:16px;background:#dadada;"></div>
<svg style="left:1433px;top:956px" width="16" height="14" viewBox="0 0 16 14"><path d="M1.5 1v13M5.5 1v13M9.5 1v13M13.5 1v13M1 1.5h13M1 5.5h13M1 9.5h13M1 13.5h13" stroke="#666" stroke-width="1.1"/></svg>
<svg style="left:1471px;top:956px" width="16" height="14" viewBox="0 0 16 14"><rect x="1" y="1" width="13" height="13" fill="none" stroke="#666" stroke-width="1.1"/><rect x="3.5" y="3.5" width="8" height="10" fill="none" stroke="#666" stroke-width="1"/><path d="M5 6h5M5 8.2h5M5 10.4h5" stroke="#666" stroke-width="0.9"/></svg>
<svg style="left:1509px;top:957px" width="16" height="14" viewBox="0 0 16 14"><path d="M1 14V0.5h13V14M1 6.5h13M5 0.5v6M9.5 0.5v6" fill="none" stroke="#666" stroke-width="1.1"/></svg>
<div style="left:1542px;top:963px;width:5px;height:2px;background:#555;"></div>
<div style="left:1551px;top:963px;width:99px;height:1px;background:#b0b0b0;"></div>
<div style="left:1600px;top:958px;width:4px;height:11px;background:#666;"></div>
<div style="left:1655px;top:963px;width:7px;height:2px;background:#555;"></div>
<div style="left:1657.5px;top:960.5px;width:2px;height:7px;background:#555;"></div>
<div class="t" style="left:1679.8px;top:964.19px;font-size:11.0px;color:#555;">100%</div>
</div>
</body></html>
